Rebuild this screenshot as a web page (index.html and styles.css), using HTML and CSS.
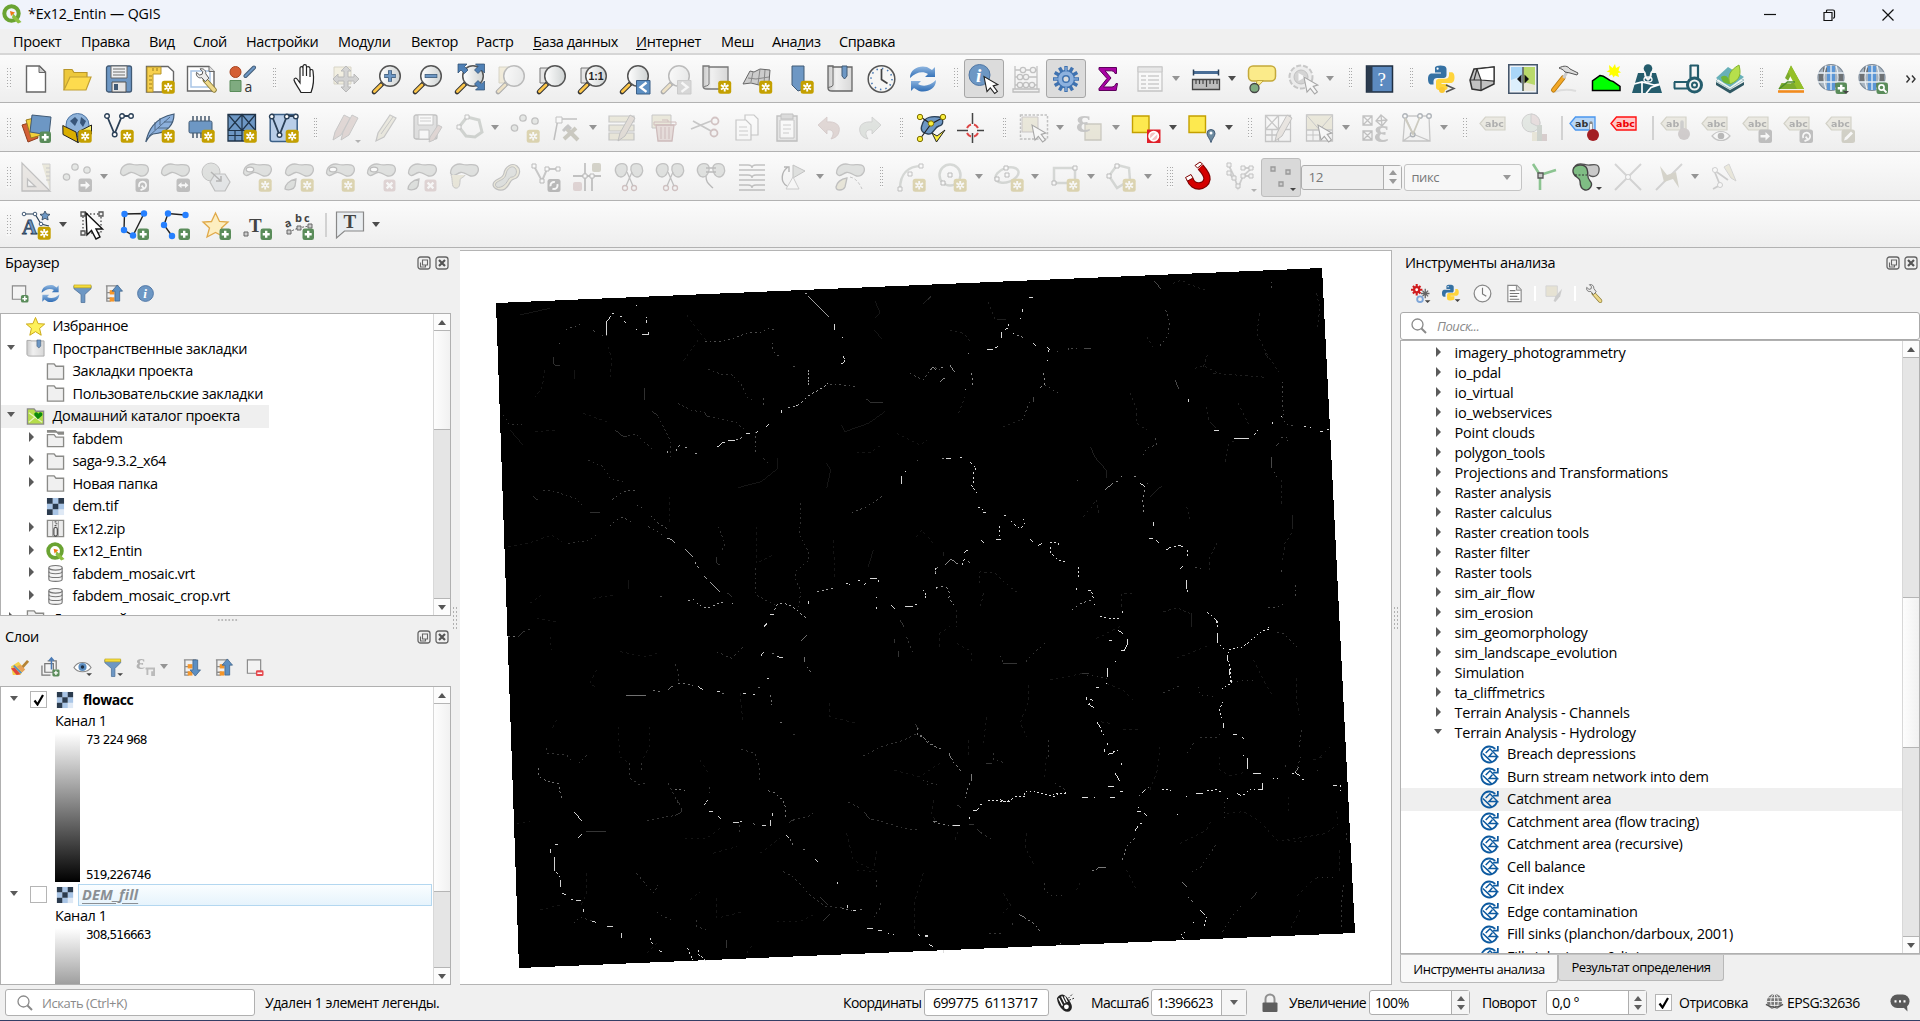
FILE: index.html
```html
<!DOCTYPE html>
<html lang="ru">
<head>
<meta charset="utf-8">
<title>*Ex12_Entin — QGIS</title>
<link rel="stylesheet" href="styles.css">
</head>
<body>
<svg class="defs" width="0" height="0" aria-hidden="true">
<defs>
<linearGradient id="gGlass" x1="0" x2="1"><stop offset="0" stop-color="#fff"/><stop offset="1" stop-color="#cfd3d3"/></linearGradient>
<linearGradient id="gPaper" x1="0" x2="1"><stop offset="0" stop-color="#c9c9c9"/><stop offset=".35" stop-color="#f0f0f0"/><stop offset="1" stop-color="#d8d8d8"/></linearGradient>
<linearGradient id="gBlue" x1="0" y1="0" x2="0" y2="1"><stop offset="0" stop-color="#8fb6e0"/><stop offset="1" stop-color="#2f6db5"/></linearGradient>
<g id="bStar"><rect x="16.7" y="16.8" width="13" height="13" rx="2.5" fill="#c4a000"/><path d="M23.2 19v8.6M19.4 21.1l7.6 4.4M27 21.1l-7.6 4.4" stroke="#fff" stroke-width="1.9"/><circle cx="23.2" cy="23.3" r=".9" fill="#c4a000"/></g>
<g id="bPlus"><rect x="18.5" y="18.5" width="11.5" height="11.5" rx="2.3" fill="#5a8c5a"/><path d="M24.2 20.8v7M20.7 24.3h7" stroke="#fff" stroke-width="2.4"/></g>
<g id="bMove"><rect x="16.5" y="16.5" width="13.5" height="13.5" rx="2.5" fill="#666"/><path d="M18.5 22h5v-3l4.5 4.3-4.5 4.3v-3h-5z" fill="#fff"/></g>
<g id="bRot"><rect x="16.5" y="16.5" width="13.5" height="13.5" rx="2.5" fill="#666"/><path d="M20.4 25a3.6 3.6 0 1 1 4.5 1.6M22.6 23.6l2.5 3-3.6 1.5" stroke="#fff" stroke-width="1.7" fill="none"/></g>
<g id="bDel"><rect x="17.5" y="17.5" width="12" height="12" rx="2.5" fill="#c99"/><path d="M20.6 20.6l5.8 5.8M26.4 20.6l-5.8 5.8" stroke="#fff" stroke-width="2.2"/></g>
<g id="mag"><path d="M2 28l9-9" stroke="#333" stroke-width="4.6" stroke-linecap="round"/><path d="M2.4 27.6l6.6-6.6" stroke="#fcc64a" stroke-width="2.8" stroke-linecap="round"/><circle cx="18" cy="12" r="10.3" fill="url(#gGlass)" stroke="#555" stroke-width="1.5"/></g>
<g id="cur"><path d="M0 0l3 15 3.3-3.6 4.4 5.6 2.7-2-4.2-5.6 4.6-1.3z" fill="#fff" stroke="#222" stroke-width="1.1"/></g>
<g id="poly"><path d="M1.500 11C2 3 9 1 14 2.500s12-2 14.500 2-1 10.500-7 9.500c-4-.7-6-4.500-10-3.500-4 1-8 6-10 .5z" fill="#b4bdb4" stroke="#666" stroke-width="1.3"/></g>
<g id="ring"><ellipse cx="8" cy="7.500" rx="3.8" ry="2.4" fill="#fff" stroke="#555" stroke-width="1.2"/></g>
<g id="leafPart"><path d="M12 17C5 18 1 23 1 27c4 2 9 0 10-3z" fill="#b4bdb4" stroke="#666" stroke-width="1.3"/></g>
<g id="label"><path d="M1 10.5L6.500 4H26v13H6.500z" fill="#d7d3b0" stroke="#9a9468" stroke-width="1.2"/></g>
<g id="knot" fill="#fff" stroke="#2b4057" stroke-width="1.4"><circle cx="3" cy="3" r="2.3"/><circle cx="10.700" cy="21.500" r="2.300"/><circle cx="18" cy="3" r="2.3"/><circle cx="27" cy="3" r="2.3"/></g>
<g id="py"><path d="M14.500 3C8 3 9 6 9 6v4h6v1H5.500S2 11 2 16.500 5 22 5 22h2.500v-3s0-3.500 3.500-3.500h6.500s3 0 3-3V6.500S21 3 14.500 3z" fill="#3571a3"/><circle cx="11.600" cy="6.200" r="1.100" fill="#fff"/><path d="M16 28c6.500 0 5.500-3 5.500-3v-3.500h-6v-1H25s3.500 0 3.500-5.500S25.500 9.700 25.500 9.700H23v3s0 3.500-3.500 3.500H13s-3 0-3 3v5.500S9.500 28 16 28z" fill="#ffd43b"/></g>
<g id="refresh"><path d="M1 13C1 4 10 0 18 2l5 3 3-3v10l-10 0 3-3C14 6 7 7 1 13z" fill="url(#gBlue)"/><path d="M27 15c0 9-9 13-17 11l-5-3-3 3V16h10l-3 3c5 3 12 2 18-4z" fill="url(#gBlue)"/></g>
<g id="globe"><circle cx="14" cy="13.500" r="13" fill="#a8b4c0" stroke="#7f8c9a" stroke-width="1.200"/><path d="M10 2h8v24h-8z" fill="#5b96d6"/><path d="M2 9.500h5.500v8H2zM20.500 9.500H26v8h-5.500zM6 3.500h4v5H6zM18 18.500h4v5h-4z" fill="#555" opacity=".7"/><path d="M9 1.500q-4 12 0 24M19 1.500q4 12 0 24M14 1v25M1 9h26M1 18h26" stroke="#e8eef4" stroke-width="1.300" fill="none"/></g>
<g id="qlogo"><circle cx="9.500" cy="9.500" r="7.200" fill="none" stroke="#6aa332" stroke-width="4"/><path d="M11 9.500l8.500 8.500-3.500 1.500-6-6z" fill="#8cbf3f"/><path d="M8 7l5 1.500-4 3.500z" fill="#ee7913"/></g>
<g id="folder"><path d="M1.500 2h7l2 2.500h8V18h-17z" fill="#f0f0f0" stroke="#8a8a87" stroke-width="1.400"/></g>
<g id="raster"><path d="M1 1h18v18H1z" fill="#dfe9f5"/><path d="M7 1h6v6H7zM1 7h6v6H1zM13 7h6v6h-6zM7 13h6v6H7z" fill="#a9c5e6"/><path d="M1 1h6v6H1zM13 1h6v6h-6zM7 7h6v6H7zM1 13h6v6H1z" fill="#2b3b4e"/></g>
<g id="db"><path d="M3 4v12c0 3 14 3 14 0V4" fill="#f4f4f4" stroke="#777" stroke-width="1.200"/><ellipse cx="10" cy="4" rx="7" ry="2.400" fill="#f4f4f4" stroke="#777" stroke-width="1.200"/><path d="M3 8c0 3 14 3 14 0M3 12c0 3 14 3 14 0" fill="none" stroke="#777" stroke-width="1.200"/></g>
<g id="saga" fill="none" stroke="#0d5aa0"><path d="M16 4.200A8.400 8.400 0 1 0 18 12.200" stroke-width="1.900"/><path d="M18.800 1v5h-5" stroke-width="1.800"/><path d="M3 9l9.500 9M6 8.500l4.500-4.500 8 8.200H9.500l3.500-4" stroke-width="1.600"/></g>
<g id="tree"><path d="M2 2h13M3 2v16h4M3 9h5M3 15h5" stroke="#8b8b8b" stroke-width="1.400" fill="none"/><rect x="6" y="6.500" width="5" height="4.500" fill="#f5962a"/><rect x="6" y="14" width="5" height="4.500" fill="#f5962a"/></g>
<g id="funnel"><path d="M1 2h18v3l-6.500 6v8.500h-4V11L1 5z" fill="#6d97c4" stroke="#4a6e96" stroke-width=".8"/><path d="M1 1h18v3H1z" fill="#f5dc3c" stroke="#b99f12" stroke-width=".6"/></g>
<g id="info"><circle cx="10" cy="10" r="8.300" fill="#6d97c4" stroke="#4f76a4"/></g>
<g id="tri"><path d="M0 0h6l-3 3z" fill="#444"/></g>
<g id="search" fill="none" stroke="#8a8a8a"><circle cx="6.500" cy="6.500" r="5.500" stroke-width="1.300"/><path d="M10.500 10.500l4.500 4.500" stroke-width="2"/></g>
<g id="wrench"><path d="M14 14l10 11" stroke="#8a7b36" stroke-width="6" stroke-linecap="round"/><path d="M15 15l9 10" stroke="#eed98a" stroke-width="4" stroke-linecap="round"/><path d="M14 15.500l-4-4.500c-4 1-7-2-6-6l3.500 3 3-1 .5-3L8 1c4-1 7 2 6.500 5.500l3.500 5z" fill="#ececec" stroke="#555" stroke-width="1.100"/></g>
<g id="float"><rect x="1" y="1" width="12" height="12" rx="2.500" fill="none" stroke="#666" stroke-width="1.300"/><path d="M5.500 4h5v5h-5zM3.500 6.500v4.500h5v-2" fill="none" stroke="#666" stroke-width="1.100"/></g>
<g id="close"><rect x="1" y="1" width="12" height="12" rx="2.500" fill="none" stroke="#666" stroke-width="1.300"/><path d="M4 4l6 6M10 4l-6 6" stroke="#555" stroke-width="2.200"/></g>
<g id="scissors" stroke="#a66" stroke-width="1.300" fill="none"><circle cx="11" cy="26" r="2.500"/><circle cx="20" cy="26" r="2.500"/><path d="M12 24L18 10M19 24L13 10" stroke="#666"/></g>
<g id="twin" fill="#b4bdb4" stroke="#666" stroke-width="1.300"><path d="M2 5c3-5 10-4 11 0s-2 10-6 10S0 9 2 5zM17 5c1-4 9-5 11 0s-1 10-5 10-7-6-6-10z"/></g>
</defs>
</svg>

<div class="window">
<header class="titlebar">
  <svg class="q" viewBox="0 0 20 20"><use href="#qlogo"/></svg>
  <h1>*Ex12_Entin — QGIS</h1>
  <div class="wbtns">
    <svg viewBox="0 0 14 14"><path d="M1 6.500h12" stroke="#111" stroke-width="1.200"/></svg>
    <svg viewBox="0 0 14 14"><path d="M2 4.500h8v8H2zM4.500 4V3q0-1 1-1H11q1.500 0 1.500 1.500V9q0 1-1.500 1.200" fill="none" stroke="#111" stroke-width="1.200"/></svg>
    <svg viewBox="0 0 14 14"><path d="M1.500 1.500l11 11M12.500 1.500l-11 11" stroke="#111" stroke-width="1.200"/></svg>
  </div>
</header>
<nav class="menu">
  <span>Проект</span><span>Правка</span><span>Вид</span><span>Слой</span><span>Настройки</span><span>Модули</span><span>Вектор</span><span>Растр</span><span><u>Б</u>аза данных</span><span><u>И</u>нтернет</span><span>Меш</span><span>Ана<u>л</u>из</span><span>Справка</span>
</nav>

<div class="bar bar1">
<i class="grip first"></i>
<span class="s"><svg viewBox="0 0 30 30"><path d="M5.500 2h13l6 6v20h-19z" fill="#fff" stroke="#666" stroke-width="1.400"/><path d="M18 2v6.500h6.500z" fill="#ccc" stroke="#666"/></svg></span>
<span class="s"><svg viewBox="0 0 30 30"><path d="M2 26V5.500h8l2 3h13V13" fill="#edc83c" stroke="#b8962a" stroke-width="1.200"/><path d="M2 26l6-13h21l-5 13z" fill="#fddb4e" stroke="#c2a032" stroke-width="1.200"/></svg></span>
<span class="s"><svg viewBox="0 0 30 30"><rect x="2.500" y="2" width="25" height="26" rx="2" fill="#6d97c4" stroke="#415a75" stroke-width="1.300"/><path d="M7 2h16v12H7z" fill="#eef0f2" stroke="#666"/><path d="M9 5h12M9 8h12M9 11h12" stroke="#999" stroke-width="1.300"/><path d="M8 18h14v10H8z" fill="#e5e5e5" stroke="#555"/><path d="M10 20h4v6h-4z" fill="#415a75"/></svg></span>
<span class="s"><svg viewBox="0 0 30 30"><path d="M1.500 2.500H23l5.500 5V28h-27z" fill="#fff" stroke="#666" stroke-width="1.400"/><path d="M2 3h14v7H8v18H2z" fill="#f7d04d" stroke="#b8962a"/><path d="M4 12h3M4 16h3M4 20h3M4 24h3M8 4v3M12 4v3" stroke="#9a7c1e"/><use href="#bStar"/></svg></span>
<span class="s"><svg viewBox="0 0 30 30"><path d="M1.500 2.500H23l5 5V27h-26.500z" fill="#fff" stroke="#666" stroke-width="1.400"/><path d="M5 7h19v16H5z" fill="none" stroke="#a9c5e6" stroke-width="1.500"/><path d="M23 2v5.500h5.500" fill="#ddd" stroke="#666"/><g transform="translate(7 4)"><use href="#wrench" transform="scale(.88)"/></g></svg></span>
<span class="s"><svg viewBox="0 0 30 30"><circle cx="8.500" cy="8" r="5.500" fill="#d45f35" stroke="#a8431f"/><path d="M3 16.500h11v11H3z" fill="#7fab80" stroke="#5a8c5a"/><path d="M18.500 12l8.500-8.500" stroke="#415a75" stroke-width="4" stroke-linecap="round"/><path d="M18.500 12l8.500-8.500" stroke="#6d97c4" stroke-width="2.200" stroke-linecap="round"/><text x="17.500" y="27.500" class="ga">a</text></svg></span>
<i class="grip wide"></i>
<span class="s"><svg viewBox="0 0 30 30"><path d="M11 28.500C9 24 5 20 4 16c0-2 2-2.500 3.500-.5L10 19V4.500C10 2 13 2 13 4.500V12 2.500C13 0 16.500 0 16.500 2.500V12 4C16.500 2 20 2 20 4.500V13 7c0-2 3-2 3 0 1 7 1 14-2 21.500z" fill="#fff" stroke="#222" stroke-width="1.200"/></svg></span>
<span class="s dis"><svg viewBox="0 0 30 30"><path d="M3 3h17v17H3z" fill="#f3e5a5" stroke="#a89b5e"/><path d="M15 2l5 5h-3v6h6v-3l5 5-5 5v-3h-6v6h3l-5 5-5-5h3v-6H7v3l-5-5 5-5v3h6V7h-3z" fill="#999" stroke="#555"/></svg></span>
<span class="s"><svg viewBox="0 0 30 30"><use href="#mag"/><path d="M18 6.200v11.600M12.200 12h11.600" stroke="#415a75" stroke-width="4"/><path d="M18 6.700v10.600M12.700 12h10.600" stroke="#6d97c4" stroke-width="2.600"/></svg></span>
<span class="s"><svg viewBox="0 0 30 30"><use href="#mag"/><path d="M11.700 12h12.600" stroke="#415a75" stroke-width="4"/><path d="M12.400 12h11.200" stroke="#6d97c4" stroke-width="2.600"/></svg></span>
<span class="s"><svg viewBox="0 0 30 30"><use href="#mag"/><g fill="#4f80b5" stroke="#2d4a6b" stroke-width=".7"><path d="M3 0h9L9.500 2.500 13 6 9.500 9.500 6 6 3 9z"/><path d="M29.500 0h-9l2.500 2.500L19.500 6 23 9.500 26.500 6l3 3z"/><path d="M29.500 26h-9l2.500-2.500-3.500-3.500 3.500-3.500 3.500 3.500 3-3z"/></g></svg></span>
<span class="s dis"><svg viewBox="0 0 30 30"><path d="M3 3h16v16H3z" fill="#f3d98a" stroke="#a89b5e"/><use href="#mag"/></svg></span>
<span class="s"><svg viewBox="0 0 30 30"><path d="M3 4h13v15H3z" fill="#e5e5e5" stroke="#777"/><use href="#mag"/></svg></span>
<span class="s"><svg viewBox="0 0 30 30"><path d="M3 4h13v15H3z" fill="#e5e5e5" stroke="#777"/><use href="#mag"/><text x="10.500" y="16" class="g11">1:1</text></svg></span>
<span class="s"><svg viewBox="0 0 30 30"><use href="#mag"/><path d="M16.500 16.500H30V30H16.500z" fill="#5d8fc2" stroke="#3b5f86"/><path d="M26.500 18.500l-6 4.700 6 4.700" stroke="#fff" stroke-width="2.400" fill="none"/></svg></span>
<span class="s dis"><svg viewBox="0 0 30 30"><use href="#mag"/><path d="M16.500 16.500H30V30H16.500z" fill="#aaa" stroke="#888"/><path d="M20.500 18.500l6 4.700-6 4.700" stroke="#fff" stroke-width="2.400" fill="none"/></svg></span>
<span class="s"><svg viewBox="0 0 30 30"><path d="M1 2h6v1h19v22H5c-3 0-4-1-4-3z" fill="url(#gPaper)" stroke="#777" stroke-width="1.300"/><path d="M7 3v17c0 2-5 2-5 3" fill="none" stroke="#777"/><use href="#bStar" x="-.5"/></svg></span>
<span class="s"><svg viewBox="0 0 30 30"><path d="M0 20L7 7l4 1 6-3 10 1-1 12-10 3-8-2z" fill="#ccc" stroke="#666"/><path d="M5 14l8 1 13-2M10 8L8 18M17 5l-2 15M22 6l-1 13" stroke="#888" fill="none"/><use href="#bStar" x="-.5"/></svg></span>
<span class="s"><svg viewBox="0 0 30 30"><path d="M7 2h12v23l-6 2-6-6z" fill="#6d97c4" stroke="#415a75"/><use href="#bStar" x="-1"/></svg></span>
<span class="s"><svg viewBox="0 0 30 30"><path d="M2 2h5v1h19v24H6c-3 0-4-1-4-3z" fill="url(#gPaper)" stroke="#666" stroke-width="1.300"/><path d="M7 3v18c0 2-5 2-5 3" fill="none" stroke="#666"/><path d="M16 2h5v10l-2.500 3-2.500-3z" fill="#6d97c4" stroke="#415a75"/></svg></span>
<span class="s"><svg viewBox="0 0 30 30"><circle cx="14.500" cy="15" r="13.300" fill="#f6f6f4" stroke="#555" stroke-width="1.500"/><circle cx="14.500" cy="15" r="10.500" fill="none" stroke="#4a7ab5" stroke-width="1.600" stroke-dasharray="1.500 4"/><path d="M14.500 5v10.500l6 4" fill="none" stroke="#444" stroke-width="1.700"/></svg></span>
<span class="s"><svg viewBox="0 0 30 30"><use href="#refresh" x="1" y="1"/></svg></span>
<i class="grip"></i>
<span class="s on"><svg viewBox="0 0 30 30"><circle cx="10.500" cy="11" r="10.500" fill="#6d97c4" stroke="#4f76a4"/><text x="7" y="18" class="gi">i</text><use href="#cur" x="15" y="12.500"/></svg></span>
<span class="s dis"><svg viewBox="0 0 30 30"><g stroke="#666" stroke-width="1.300" fill="#eee"><path d="M4 2v24M26 2v24M4 6h22M4 13h22M4 21h22" /><path d="M2 25h26v3H2z"/><circle cx="12" cy="6" r="2.700"/><circle cx="22" cy="6" r="2.700"/><circle cx="9" cy="13" r="2.700"/><circle cx="15" cy="13" r="2.700"/><circle cx="9" cy="21" r="2.700"/><circle cx="15" cy="21" r="2.700"/><circle cx="21" cy="21" r="2.700"/></g></svg></span>
<span class="s on"><svg viewBox="0 0 30 30"><path d="M15 2v26M2 15h26M8.500 3.700l13 22.600M3.700 21.500l22.600-13M21.500 3.700l-13 22.600M3.700 8.500l22.600 13" stroke="#3f72b0" stroke-width="3.400"/><circle cx="15" cy="15" r="8.500" fill="#8db1de" stroke="#3f72b0" stroke-width="1.300"/><path d="M15 3v4M15 23v4M3 15h4M23 15h4" stroke="#7ea6d8" stroke-width="1.600"/><circle cx="15" cy="15" r="3.300" fill="#dcdcdc" stroke="#3f72b0" stroke-width="1.500"/></svg></span>
<span class="s"><svg viewBox="0 0 30 30"><path d="M6 3.500h17.500v6h-1.500q-.6-2.700-3.500-2.700h-6.500l6 7.200-7.500 9h8.500q3 0 4-3.500h1.500l-1.300 7H6v-2l8-10-8-9z" fill="#a803a3" stroke="#5e005c" stroke-width="1"/></svg></span>
<span class="s dis"><svg viewBox="0 0 30 30"><path d="M3 3h24v24H3z" fill="#fff" stroke="#777" stroke-width="1.300"/><path d="M3 3h24v5H3z" fill="#ccc" stroke="#777"/><path d="M6 12h5M13 12h11M6 16h5M13 16h11M6 20h5M13 20h11M6 24h5M13 24h11" stroke="#888" stroke-width="1.500"/></svg></span><i class="arr off"></i>
<span class="s"><svg viewBox="0 0 30 30"><path d="M2 8.500h26" stroke="#4a6e96" stroke-width="3"/><path d="M2.500 5.500v6M27.500 5.500v6" stroke="#2b4057" stroke-width="1.500"/><path d="M1.500 15.500h27v10h-27z" fill="#bdbdbd" stroke="#444" stroke-width="1.300"/><path d="M5 16v4M8.500 16v4M12 16v4M15.500 16v7M19 16v4M22.500 16v4M26 16v4" stroke="#444" stroke-width="1.200"/></svg></span><i class="arr"></i>
<span class="s"><svg viewBox="0 0 30 30"><rect x="1.500" y="2" width="27" height="15" rx="4.500" fill="#fbeb8a" stroke="#c4a93a" stroke-width="1.500"/><path d="M10 16.500l-2 9 8.500-9z" fill="#fbeb8a" stroke="#c4a93a"/><circle cx="7.500" cy="24" r="4.500" fill="#7fab80" stroke="#444" stroke-width="1.300"/></svg></span>
<span class="s dis"><svg viewBox="0 0 30 30"><circle cx="13" cy="13" r="11.500" fill="#ddd" stroke="#777" stroke-width="2" stroke-dasharray="5 2"/><circle cx="13" cy="13" r="7" fill="#999" stroke="#666"/><path d="M10.500 9l7 4-7 4z" fill="#fff"/><use href="#cur" x="16" y="13"/></svg></span><i class="arr off"></i>
<i class="grip"></i>
<span class="s"><svg viewBox="0 0 30 30"><path d="M1.500 2h26v26h-26z" fill="#5c8ac0" stroke="#1f2f42" stroke-width="1.500"/><path d="M1.500 2h6v26h-6z" fill="#2b3b4e"/><text x="12.500" y="21.500" class="gq">?</text></svg></span>
<i class="grip"></i>
<span class="s"><svg viewBox="0 0 30 30"><use href="#py" y="-1.500"/><circle cx="16" cy="26" r="3" fill="#fbc832"/><path d="M20 21l8 3.500-8 3.500" fill="none" stroke="#555" stroke-width="1.500"/></svg></span>
<span class="s"><svg viewBox="0 0 30 30"><path d="M7 5l20-2v17l-13 6.500L5 25 3 16z" fill="#c2c2c2" stroke="#333" stroke-width="1.500"/><path d="M10 5l17-2v14l-13-1z" fill="#fff" stroke="#333" stroke-width="1.200"/><path d="M3 16l11 0v10M10 5L7 16" fill="none" stroke="#333" stroke-width="1.200"/></svg></span>
<span class="s"><svg viewBox="0 0 30 30"><path d="M.8.800h28.400v28.400H.8z" fill="#eef3f8" stroke="#45566b" stroke-width="1.600"/><path d="M3 3h11.500v24H3z" fill="#a9d6f8"/><path d="M15.500 3H27v24H15.500z" fill="#b9d96b"/><path d="M16 18l11 3v6H16z" fill="#e9e6d8"/><path d="M3 16l11-4v15H3z" fill="#dceffc"/><path d="M15 3v24" stroke="#333" stroke-width="1.200"/><path d="M9 15l4.500-4.500v9zM21 15l-4.500-4.500v9z" fill="#111"/></svg></span>
<span class="s"><svg viewBox="0 0 30 30"><path d="M4 28q11-4 22-1" stroke="#ddd" stroke-width="2" fill="none"/><path d="M13 14L3.500 26" stroke="#b87a10" stroke-width="5" stroke-linecap="round"/><path d="M13 14L3.500 26" stroke="#f3a827" stroke-width="3.200" stroke-linecap="round"/><path d="M17 8l-3.500 6" stroke="#ccc" stroke-width="3"/><path d="M9 4c5-3 9-2 11 1l8 4-1 2-7-2-5-1c-2-3-4-3-6-4z" fill="#ddd" stroke="#555"/></svg></span>
<span class="s"><svg viewBox="0 0 30 30"><path d="M1.500 26.500V17L9 11.500c6 0 7 5 13 6l7 5v4z" fill="#0f0" stroke="#000" stroke-width="1.500"/><path d="M18 1l3.500 3L24 0l1 4 4-2-1.500 4.500 2.500 2-3 .5 1 4-4-1.500-1.500 2-1.500-3-3 1.500 1-3.500-3.500-1 3-1.500z" fill="#ff0"/></svg></span>
<span class="s"><svg viewBox="0 0 30 30"><path d="M6 9h6c0 3 1 6 4 8 3-2 4-5 4-8h4l6 20H0z" fill="#245c6c"/><circle cx="16" cy="4.500" r="4.300" fill="#245c6c"/><path d="M13.500 8h5l-1.500 6h-2z" fill="#245c6c"/><path d="M2 20l8-2 12 3 6-1M14 29.500l5-6 9-3M10 18v11" stroke="#fff" stroke-width="1.700" fill="none"/><ellipse cx="16" cy="15.500" rx="4" ry="2.500" fill="none" stroke="#fff" stroke-width="1.300"/></svg></span>
<span class="s"><svg viewBox="0 0 30 30"><g fill="none" stroke="#245c6c"><path d="M17.500 1v13M25 1v13M17 1.500h8.500" stroke-width="2.200"/><path d="M1 18h14M1 24.500h14M1.500 18v6.500" stroke-width="2"/><circle cx="21.500" cy="21" r="7" stroke-width="3"/><circle cx="21.500" cy="21" r="2.500" stroke-width="2"/></g></svg></span>
<span class="s"><svg viewBox="0 0 30 30"><path d="M1 18l14 8 14-8v3L15 29.500 1 21z" fill="#2f5863"/><path d="M1 17L11 7l18 9-14 9z" fill="#eef3f3" stroke="#9fc2c6"/><path d="M1 14L13 3l16 10-14 10z" fill="#67b0b8"/><path d="M6 13c5-3 8 0 9 7-5 0-8-2-9-7z" fill="#6fb536"/><path d="M15 20c-3-8 0-14 9-19 2 8 2 15-9 19z" fill="#b6df4c" stroke="#84b52f"/></svg></span>
<i class="grip"></i>
<span class="s"><svg viewBox="0 0 30 30"><path d="M15 1.500L28 25H2.500l3-6 10 .5L9 14z" fill="#7cab2d"/><path d="M11 19l4-8 4.500 8z" fill="#fff"/><path d="M15 1.500L28 25h-7L12 8z" fill="#94bf28"/><path d="M3 25l8.500-7H19" fill="none" stroke="#4d8a2c" stroke-width="1.500"/><path d="M2 27.500h26" stroke="#f28b1e" stroke-width="2.600"/></svg></span>
<span class="s"><svg viewBox="0 0 30 30"><use href="#globe"/><use href="#bPlus"/><use href="#tri" x="26" y="27"/></svg></span>
<span class="s"><svg viewBox="0 0 30 30"><use href="#globe"/><rect x="18.500" y="18.500" width="11.500" height="11.500" rx="2.300" fill="#5a8c5a"/><circle cx="23.500" cy="23.500" r="2.600" fill="none" stroke="#fff" stroke-width="1.600"/><path d="M25.500 25.500l3 3" stroke="#fff" stroke-width="1.800"/></svg></span>
<svg class="more" viewBox="0 0 12 10"><path d="M1.500 1.500l3 3.500-3 3.500M7 1.500L10 5 7 8.500" fill="none" stroke="#333" stroke-width="1.400"/></svg>
</div>

<div class="bar bar2">
<i class="grip first"></i>
<span class="s"><svg viewBox="0 0 30 30"><path d="M1 12l10-3 6 16-10 4z" fill="#d45f35" stroke="#8f3d1e"/><path d="M5 7l12-3 4 18-11 3z" fill="#f2cf3a" stroke="#9a7c1e"/><path d="M11 2l19 2-2 18-19-3z" fill="#6d97c4" stroke="#415a75"/><use href="#bPlus"/></svg></span>
<span class="s"><svg viewBox="0 0 30 30"><circle cx="15.500" cy="12" r="11.500" fill="#8fb3da" stroke="#4f76a4"/><path d="M8 8l5-4 3 3-3 6zM19 4l5 4-3 6-3-4z" fill="#38567a"/><path d="M.8 12.500L14 19l2 10.500-15-8z" fill="#d9ae00" stroke="#222"/><path d="M16 19l13.500-7v9L16 29.500z" fill="#fbf06a" stroke="#222"/><use href="#bStar"/></svg></span>
<span class="s"><svg viewBox="0 0 30 30"><path d="M3 3l7.500 18L18 3h9" stroke="#2b4057" stroke-width="1.800" fill="none"/><use href="#knot"/><use href="#bStar"/></svg></span>
<span class="s"><svg viewBox="0 0 30 30"><path d="M.8 29C3 19 8 5 29 1c0 10-6 19-21 20C5 22 3 25 .8 29z" fill="#8cb0dc" stroke="#415a75" stroke-width="1.200"/><path d="M4 23L25 4M10 17V9M15 12V5M13 15h10M19 9h8" stroke="#415a75" fill="none" stroke-width=".8"/><use href="#bStar"/></svg></span>
<span class="s"><svg viewBox="0 0 30 30"><path d="M7 3v22M11 3v22M15 3v22M19 3v22M23 3v22" stroke="#2b4057" stroke-width="1.300"/><rect x="3" y="8" width="23" height="12" rx="1.500" fill="#6d97c4" stroke="#415a75"/><use href="#bStar" x="-1"/></svg></span>
<span class="s"><svg viewBox="0 0 30 30"><path d="M1 1.500h27.500V28H1z" fill="#6d97c4" stroke="#1f3348" stroke-width="1.300"/><path d="M1 1.500l14 16 13.500-16M1 17.500L15 1.500l13.500 16M1 17.500h27.500M15 1.500V28M1 22.500h14M8 17.500V28" stroke="#1f3348" stroke-width="1.200" fill="none"/><use href="#bStar"/></svg></span>
<span class="s"><svg viewBox="0 0 30 30"><rect x="1.200" y="1.500" width="27" height="27" rx="2" fill="#b9cee8" stroke="#3b5f86" stroke-width="1.500"/><path d="M3 3l7.500 19L18 3h8" stroke="#2b4057" stroke-width="1.800" fill="none"/><use href="#knot" x="-.2" y=".5"/><use href="#bStar"/></svg></span>
<i class="grip"></i>
<span class="s dis"><svg viewBox="0 0 30 30"><g fill="#c9a096" stroke="#777"><path d="M3 27l2-8L14 2l6 3-9 17z"/><path d="M11 27l2-8L22 2l6 3-9 17z"/></g></svg><svg class="dd" viewBox="0 0 6 3"><use href="#tri"/></svg></span>
<span class="s dis"><svg viewBox="0 0 30 30"><path d="M5 28l2-8L19 2l6 3-12 19z" fill="#d8d2a8" stroke="#777" stroke-width="1.200"/><path d="M10 21L22 4" stroke="#777"/></svg></span>
<span class="s dis"><svg viewBox="0 0 30 30"><rect x="2" y="2" width="23" height="24" rx="2" fill="#bbb" stroke="#666" stroke-width="1.300"/><path d="M6 2h15v10H6z" fill="#fff" stroke="#777"/><path d="M8 5h11M8 8h11" stroke="#888"/><path d="M7 17h10v9H7z" fill="#fff" stroke="#777"/><path d="M17 29l1-5 8-12 4 2-8 13z" fill="#c9a096" stroke="#777"/></svg></span>
<span class="s dis"><svg viewBox="0 0 30 30"><path d="M5 14l8-10 12 3 3 12-7 5-9-1z" fill="none" stroke="#8d9b8d" stroke-width="3"/><g fill="#fff" stroke="#666"><path d="M3 12h4v4H3zM11 2h4v4h-4z"/></g></svg></span><i class="arr off"></i>
<span class="s dis"><svg viewBox="0 0 30 30"><g fill="#c5cdc5" stroke="#666" stroke-width="1.300"><circle cx="13" cy="5" r="3.200"/><circle cx="25" cy="8" r="3.200"/><circle cx="4.500" cy="15" r="3.200"/></g><use href="#bStar"/></svg></span>
<span class="s dis"><svg viewBox="0 0 30 30"><path d="M6 6h20M7 6L3 27" stroke="#666" stroke-width="1.500"/><path d="M5 4h6v6H5z" fill="#fff" stroke="#666"/><path d="M13 26l12-11M14 14l13 13" stroke="#877f5a" stroke-width="4"/><path d="M12 18l5-5 3 3" stroke="#777" stroke-width="3" fill="none"/></svg></span><i class="arr off"></i>
<span class="s dis"><svg viewBox="0 0 30 30"><g fill="#d9cf95" stroke="#777" stroke-width="1.200"><path d="M2 3h25v6H2zM2 12h25v6H2zM2 20h25v7H2z"/></g><path d="M11 28l2-8L23 2l5 3-10 18z" fill="#c9b096" stroke="#666"/></svg></span>
<span class="s dis"><svg viewBox="0 0 30 30"><path d="M3 2h19v13H3z" fill="#d9cf95" stroke="#777"/><path d="M7 12h18l-2 16H9z" fill="#dcb0a8" stroke="#a55" stroke-width="1.300"/><path d="M5 9h22v3H5zM12 14v12M16 14v12M20 14v12M13 7h6v2" stroke="#a55" fill="none"/></svg></span>
<span class="s dis"><svg viewBox="0 0 30 30"><path d="M1 16l20-8M3 8l18 10" stroke="#777" stroke-width="1.800"/><g fill="none" stroke="#a66" stroke-width="1.800"><circle cx="25" cy="8" r="3.500"/><circle cx="24" cy="20" r="3.500"/></g></svg></span>
<span class="s dis"><svg viewBox="0 0 30 30"><g fill="#fff" stroke="#777" stroke-width="1.200"><path d="M14 2h9l4 4v16H14z"/><path d="M5 7h10l5 5v15H5z"/></g><path d="M8 14h8M8 18h9M8 22h9" stroke="#888"/></svg></span>
<span class="s dis"><svg viewBox="0 0 30 30"><path d="M5 3h20v25H5z" fill="#ccc" stroke="#666" stroke-width="1.400"/><path d="M8 7h14v18H8z" fill="#fff" stroke="#777"/><path d="M9 1h12v5H9z" fill="#aaa" stroke="#666"/><path d="M11 12h8M11 16h8M11 20h6" stroke="#888"/></svg></span>
<span class="s dis"><svg viewBox="0 0 30 30"><path d="M4 12l9-8v5c8-1 14 3 12 10-1 4-4 6-8 7 4-6 2-10-4-9v4z" fill="#c9a096" stroke="#a77" stroke-width=".8"/></svg></span>
<span class="s dis"><svg viewBox="0 0 30 30"><path d="M26 12l-9-8v5C9 8 3 12 5 19c1 4 4 6 8 7-4-6-2-10 4-9v4z" fill="#b5c5b5" stroke="#888" stroke-width=".8"/></svg></span>
<i class="grip"></i>
<span class="s"><svg viewBox="0 0 30 30"><path d="M6 12C8 3 18 3 23 4s5 8 0 9-5 9-11 8-8-4-6-9z" fill="#6d97c4" stroke="#2b4057" stroke-width="1.300"/><path d="M4 3.500l11 7.500L28 4M15 11L4 26" stroke="#222" stroke-width="1.200" fill="none"/><g fill="#f9ee3e" stroke="#7d6d00"><circle cx="4" cy="4" r="2.700"/><circle cx="27" cy="4" r="2.700"/><circle cx="15" cy="10.500" r="2.700"/><circle cx="4" cy="26" r="2.700"/></g><path d="M16 20l5 3 8-6-8.500 12z" fill="#fcef3c" stroke="#222" stroke-width="1"/></svg></span>
<span class="s"><svg viewBox="0 0 30 30"><path d="M15.500 0v11M15.500 20v10M0 17.500h11M20 17.500h7" stroke="#444" stroke-width="1.500"/><path d="M10 15c1-2 2-3 4-3.500M17 11.500c2 .5 3 1.500 4 3.500M10 20c1 2 2 3 4 3.500M17 23.500c2-.5 3-1.500 4-3.500" stroke="#d44" stroke-width="2" fill="none"/></svg></span>
<i class="grip"></i>
<span class="s dis"><svg viewBox="0 0 30 30"><path d="M1.500 2h27v24h-27z" fill="none" stroke="#666" stroke-width="1.500" stroke-dasharray="2.500 1.500"/><path d="M3 4h16v15H3z" fill="#d9cf95" stroke="#877"/><use href="#cur" x="13" y="12"/></svg></span><i class="arr off"></i>
<span class="s dis"><svg viewBox="0 0 30 30"><path d="M10 11h16v16H10z" fill="#d9cf95" stroke="#877f5a" stroke-width="1.300"/><text x="1" y="19" class="ge">ε</text></svg></span><i class="arr off"></i>
<span class="s"><svg viewBox="0 0 30 30"><path d="M1.500 3h16.500v16.500H1.500z" fill="#fde94f" stroke="#c4a000" stroke-width="1.400"/><path d="M16 16.500h13.500V30H16z" fill="#e0202a"/><circle cx="22.700" cy="23.200" r="4.600" fill="#f7c0c2" stroke="#fff" stroke-width="1.800"/><path d="M19.500 26.500l6.500-6.500" stroke="#fff" stroke-width="2"/></svg></span><i class="arr"></i>
<span class="s"><svg viewBox="0 0 30 30"><path d="M2 3h16.500v16.500H2z" fill="#fde94f" stroke="#c4a000" stroke-width="1.400"/><path d="M24 29.500c-1-4-4-6-4-9a4 4 0 0 1 8 0c0 3-3 5-4 9z" fill="#6d8ba0" stroke="#415a75"/><circle cx="24" cy="20" r="1.500" fill="#fff"/></svg></span><i class="arr"></i>
<i class="grip"></i>
<span class="s dis"><svg viewBox="0 0 30 30"><path d="M1.500 2.500h25v26h-25zM1.500 2.500l13 14 12-14M1.500 16.500h25M1.500 22h13M8 16.500v12M14.500 2.500v26M1.500 16.500l13-14" fill="none" stroke="#777" stroke-width="1.300"/><path d="M11 28l2-8L23 2l5 3-10 18z" fill="#d9c8b6" stroke="#666"/></svg></span>
<span class="s dis"><svg viewBox="0 0 30 30"><path d="M1.500 2h26v26h-26z" fill="none" stroke="#777" stroke-width="1.300"/><path d="M1.500 2h26v15h-26z" fill="#d9cf95" stroke="#777"/><path d="M1.500 2l13 15 13-15M1.500 17h26M1.500 22h13M8 17v11M14.500 17v11" fill="none" stroke="#777"/><use href="#cur" x="13" y="12"/></svg></span><i class="arr off"></i>
<span class="s dis"><svg viewBox="0 0 30 30"><path d="M2 3h9v9H2zM2 18h9v9H2zM2 3l9 9M11 3l-9 9M2 18l9 9M11 18l-9 9M20 2l6 5-5 6-6-5zM20 2l1 11M15 8l11-1" fill="none" stroke="#666" stroke-width="1.300"/><text x="13" y="29" class="ge">ε</text></svg></span>
<span class="s dis"><svg viewBox="0 0 30 30"><path d="M3 3h24l1 25H1zM1 28l10-7L3 3M11 21l17 7" fill="none" stroke="#777" stroke-width="1.300"/><use href="#knot"/><path d="M3 5l8 16 7-17" fill="none" stroke="#8a8250" stroke-width="1.800"/></svg></span><i class="arr off"></i>
<i class="grip"></i>
<span class="s dis"><svg viewBox="0 0 30 30"><use href="#label"/><text x="6" y="14" class="gl">abc</text></svg></span>
<span class="s dis"><svg viewBox="0 0 30 30"><circle cx="11" cy="10" r="9" fill="#bcd0bc" stroke="#888"/><path d="M11 10V1a9 9 0 0 1 8 13z" fill="#d9b0b0" stroke="#888"/><path d="M12 19h5v9h-5z" fill="#d9cf95"/><path d="M17 12h5v16h-5z" fill="#8aa08a"/><path d="M22 21h5v7h-5z" fill="#b98a8a"/></svg></span>
<i class="sep"></i>
<span class="s"><svg viewBox="0 0 30 30"><path d="M1 10.500L6.500 4H26v13H6.500z" fill="#b8d6f5" stroke="#4a96ee" stroke-width="1.300"/><text x="6" y="14" class="gl">ab</text><path d="M22 10v8" stroke="#888" stroke-width="3.500" stroke-linecap="round"/><path d="M22 11v6" stroke="#fff" stroke-width="1.800"/><circle cx="24" cy="22" r="6" fill="#a31f24"/></svg></span>
<span class="s"><svg viewBox="0 0 30 30"><path d="M1 10.500L6.500 4H26v13H6.500z" fill="#ffc9c9" stroke="#f11" stroke-width="1.400"/><text x="6" y="14" class="gl red">abc</text></svg></span>
<i class="sep"></i>
<span class="s dis"><svg viewBox="0 0 30 30"><use href="#label"/><text x="6" y="14" class="gl">ab</text><path d="M22 9v8" stroke="#888" stroke-width="3.500" stroke-linecap="round"/><circle cx="24" cy="21" r="6" fill="#988"/></svg></span>
<span class="s dis"><svg viewBox="0 0 30 30"><use href="#label"/><text x="6" y="14" class="gl">abc</text><path d="M11 23c5-6 13-6 18 0-5 6-13 6-18 0z" fill="#fff" stroke="#777" stroke-width="1.200"/><circle cx="20" cy="23" r="3.300" fill="#555"/></svg></span>
<span class="s dis"><svg viewBox="0 0 30 30"><use href="#label"/><text x="6" y="14" class="gl">abc</text><use href="#bMove"/></svg></span>
<span class="s dis"><svg viewBox="0 0 30 30"><use href="#label"/><text x="6" y="14" class="gl">abc</text><use href="#bRot"/></svg></span>
<span class="s dis"><svg viewBox="0 0 30 30"><use href="#label"/><text x="6" y="14" class="gl">abc</text><rect x="16.500" y="16.500" width="13.500" height="13.500" rx="2.500" fill="#9a9468"/><path d="M19 27.500l1-3 6-6 2 2-6 6z" fill="#fff"/></svg></span>
</div>

<div class="bar bar3">
<i class="grip first"></i>
<span class="s dis"><svg viewBox="0 0 30 30"><path d="M1 1v28h28zM6.500 17v7.500h8z" fill="#d8ccc0" stroke="#666" stroke-width="1.300" fill-rule="evenodd"/><path d="M21 2h8v26" fill="#d9cf95" stroke="#888"/><path d="M25 6h4M25 10h4M25 14h4M25 18h4" stroke="#777"/></svg></span>
<span class="s dis"><svg viewBox="0 0 30 30"><g fill="#c5cdc5" stroke="#666" stroke-width="1.200"><circle cx="13" cy="5" r="3.200"/><circle cx="25" cy="8" r="3.200"/><circle cx="4.500" cy="15" r="3.200"/></g><use href="#bMove"/></svg></span><i class="arr off"></i>
<span class="s dis"><svg viewBox="0 0 30 30"><use href="#poly"/><use href="#bRot"/></svg></span>
<span class="s dis"><svg viewBox="0 0 30 30"><use href="#poly"/><rect x="16.500" y="16.500" width="13.500" height="13.500" rx="2.500" fill="#666"/><path d="M18 23.200l3.500-3v2h3.500v-2l3.500 3-3.500 3v-2h-3.500v2z" fill="#fff"/></svg></span>
<span class="s dis"><svg viewBox="0 0 30 30"><circle cx="10" cy="10" r="9" fill="#b4bdb4" stroke="#666"/><path d="M14 12h10l5 8-5 9H14l-5-9z" fill="#c5cdd5" stroke="#666" stroke-width="1.200"/><path d="M10 10l10 9M20 14v5h-5" stroke="#444" fill="none" stroke-width="1.500"/></svg></span>
<span class="s dis"><svg viewBox="0 0 30 30"><use href="#poly"/><use href="#ring"/><use href="#bStar"/></svg></span>
<span class="s dis"><svg viewBox="0 0 30 30"><use href="#poly"/><use href="#leafPart"/><use href="#bStar"/></svg></span>
<span class="s dis"><svg viewBox="0 0 30 30"><use href="#poly"/><use href="#ring"/><use href="#bStar"/></svg></span>
<span class="s dis"><svg viewBox="0 0 30 30"><use href="#poly"/><use href="#ring"/><use href="#bDel"/></svg></span>
<span class="s dis"><svg viewBox="0 0 30 30"><use href="#poly"/><use href="#leafPart"/><use href="#bDel"/></svg></span>
<span class="s dis"><svg viewBox="0 0 30 30"><use href="#poly"/><path d="M2 13c2 4 0 12 4 13s5-3 5-7 4-3 5-6" fill="#d9cf95" stroke="#777"/></svg></span>
<span class="s dis"><svg viewBox="0 0 30 30"><path d="M4 20c3-4 9-3 10-9S22 0 27 4s2 12-3 13-4 7-9 10S0 26 4 20z" fill="#d9cf95" stroke="#666" stroke-width="1.200"/><path d="M6 21c3-3 9-3 10-9s6-9 9-6 1 9-3 9-4 6-9 9-9 1-7-3z" fill="#b4bdb4" stroke="#666"/></svg></span>
<span class="s dis"><svg viewBox="0 0 30 30"><path d="M3 4l8 15 5-12h11" fill="none" stroke="#777" stroke-width="2"/><g fill="#fff" stroke="#555"><path d="M1 2h4v4H1zM9 17h4v4H9zM14 5h4v4h-4zM25 5h4v4h-4z"/></g><rect x="16.500" y="17" width="13" height="13" rx="2.500" fill="#555"/><circle cx="23" cy="23.500" r="3.500" fill="none" stroke="#fff" stroke-width="2" stroke-dasharray="7 3"/></svg></span>
<span class="s dis"><svg viewBox="0 0 30 30"><path d="M13 1v28M1 14h28M20 14v15" stroke="#666" stroke-width="1.800"/><g fill="#fff" stroke="#555"><path d="M11 12h4v4h-4zM18 12h4v4h-4z"/></g><rect x="20" y="1" width="9" height="9" rx="2" fill="#9a9468"/><rect x="1" y="20" width="9" height="9" rx="2" fill="#c99"/></svg></span>
<span class="s dis"><svg viewBox="0 0 30 30"><use href="#twin"/><use href="#scissors"/></svg></span>
<span class="s dis"><svg viewBox="0 0 30 30"><use href="#twin"/><use href="#scissors"/></svg></span>
<span class="s dis"><svg viewBox="0 0 30 30"><use href="#twin"/><path d="M10 6h10M10 10h10M10 14c0 7 3 8 7 12" stroke="#555" stroke-width="1.300" fill="none"/></svg></span>
<span class="s dis"><svg viewBox="0 0 30 30"><path d="M2 3h9q4 0 4 3 0-3 4-3h9M2 8h26M2 13h9q4 0 4 3 0-3 4-3h9M2 18h26M2 23h9q4 0 4 3 0-3 4-3h9M2 28h26" stroke="#666" stroke-width="1.400" fill="none"/></svg></span>
<span class="s dis"><svg viewBox="0 0 30 30"><path d="M14 3l12 6-12 7z" fill="#b4bdb4" stroke="#666"/><path d="M14 15l6 12H7z" fill="#fff" stroke="#888"/><path d="M8 24C1 20 2 10 9 5M5 5h5v5" stroke="#444" stroke-width="1.400" fill="none"/></svg></span><i class="arr off"></i>
<span class="s dis"><svg viewBox="0 0 30 30"><use href="#poly"/><path d="M12 16c-6 1-10 4-11 9 0 4 7 4 9 0z" fill="#d9cf95" stroke="#666" stroke-width="1.300"/><path d="M15 15c5 1 9 5 12 12" stroke="#777" stroke-dasharray="3 2" fill="none"/></svg></span>
<i class="grip"></i>
<span class="s dis"><svg viewBox="0 0 30 30"><path d="M4 27C4 12 12 4 26 4" stroke="#9aa59a" stroke-width="2.500" fill="none"/><g fill="#fff" stroke="#666"><path d="M2 25h4v4H2zM12 10h4v4h-4zM23 2h4v4h-4z"/></g><use href="#bStar"/></svg></span>
<span class="s dis"><svg viewBox="0 0 30 30"><circle cx="13" cy="13" r="10.500" fill="none" stroke="#9aa59a" stroke-width="2.500"/><path d="M11 11h4v4h-4zM4 19h4v4H4z" fill="#fff" stroke="#555"/><use href="#bStar"/></svg></span><i class="arr off"></i>
<span class="s dis"><svg viewBox="0 0 30 30"><ellipse cx="13" cy="13" rx="12" ry="7" fill="none" stroke="#9aa59a" stroke-width="2.500" transform="rotate(-20 13 13)"/><path d="M11 11h4v4h-4zM10 4h4v4h-4zM1 15h4v4H1z" fill="#fff" stroke="#555"/><use href="#bStar"/></svg></span><i class="arr off"></i>
<span class="s dis"><svg viewBox="0 0 30 30"><path d="M4 6h21v15H4z" fill="none" stroke="#9aa59a" stroke-width="2.500"/><path d="M2 19h4v4H2zM23 4h4v4h-4z" fill="#fff" stroke="#555"/><use href="#bStar"/></svg></span><i class="arr off"></i>
<span class="s dis"><svg viewBox="0 0 30 30"><path d="M3 14L11 3l12 3 1 12-13 8z" fill="none" stroke="#9aa59a" stroke-width="2.500"/><path d="M1 12h4v4H1zM9 2h4v4H9z" fill="#fff" stroke="#555"/><use href="#bStar"/></svg></span><i class="arr off"></i>
<i class="grip snap"></i>
<span class="s"><svg viewBox="0 0 30 30"><path d="M6 17C9 27 22 25.500 23 17q.500-4-6.500-12" stroke="#7e0000" stroke-width="7.400" fill="none"/><path d="M6 17C9 27 22 25.500 23 17q.500-4-6.500-12" stroke="#d40000" stroke-width="5.200" fill="none"/><path d="M3.500 19l5.500-3-2-3.500-5.500 3zM13.500 6l5-4 -2.500-2-5 3.500z" fill="#fff" stroke="#7e0000"/></svg></span>
<span class="s dis"><svg viewBox="0 0 30 30"><path d="M3 4l5 10 4 12 5-12 9-8h-9M3 10l5 8M17 14h9" fill="none" stroke="#888" stroke-width="1.800"/><g fill="#eee" stroke="#666"><path d="M1 1h4v4H1zM1 9h4v4H1zM6 14h4v4H6zM10 22h4v4h-4zM15 4h4v4h-4zM23 4h4v4h-4zM15 12h4v4h-4zM23 12h4v4h-4z"/></g></svg><svg class="dd" viewBox="0 0 6 3"><use href="#tri"/></svg></span>
<span class="s on soft"><svg viewBox="0 0 30 30"><g fill="#ccc" stroke="#999" stroke-width="1.300"><path d="M5 5h4v4H5zM20 8h4v4h-4zM13 20h4v4h-4z"/></g></svg><svg class="dd" viewBox="0 0 6 3"><use href="#tri"/></svg></span>
<div class="spin big"><span>12</span><i><b class="up"></b><b class="dn"></b></i></div>
<div class="combo"><span>пикс</span><b class="dn"></b></div>
<span class="s"><svg viewBox="0 0 30 30"><path d="M3 2l7 11M10 13l16-5M10 13v15" stroke="#8cc491" stroke-width="2.600"/><path d="M8 11h5v5H8z" fill="#ccc" stroke="#555" stroke-width="1.300"/></svg></span>
<span class="s"><svg viewBox="0 0 30 30"><path d="M4 4c5-5 10 0 15-1s10-1 9 6-8 6-10 4" fill="#c9c9c9" stroke="#555" stroke-width="1.300"/><path d="M2 8c1-6 12-7 14-1s-1 8 3 12-1 10-5 9-5-5-5-9-8-4-7-11z" fill="#7fbd84" stroke="#444" stroke-width="1.400"/><path d="M4 13h12" stroke="#333" stroke-dasharray="2 1.500"/><use href="#tri" x="25" y="25"/></svg></span>
<span class="s dis"><svg viewBox="0 0 30 30"><path d="M2 2l26 26M28 2L2 28" stroke="#999" stroke-width="2"/><circle cx="15" cy="15" r="2.500" fill="#fff" stroke="#888"/></svg></span>
<span class="s dis"><svg viewBox="0 0 30 30"><path d="M2 28L28 2" stroke="#999" stroke-width="2"/><path d="M6 4l7 9 9-3 3 16-6-9-9 3z" fill="#a09a70"/></svg></span><i class="arr off"></i>
<span class="s dis"><svg viewBox="0 0 30 30"><path d="M3 27l7-4L4 8l14 10" fill="none" stroke="#888" stroke-width="1.800"/><circle cx="5" cy="8" r="2.500" fill="#fff" stroke="#888"/><circle cx="10" cy="23" r="2.500" fill="#fff" stroke="#888"/><path d="M14 5l5-3 7 17-5-3z" fill="#d9cf95" stroke="#999"/></svg></span>
</div>

<div class="bar bar4">
<i class="grip first"></i>
<span class="s"><svg viewBox="0 0 30 30"><path d="M2 4h12l6 10 8 2" stroke="#2b4057" stroke-width="1.200" fill="none"/><g fill="#fff" stroke="#415a75"><circle cx="3" cy="4" r="1.800"/><circle cx="14" cy="4" r="1.800"/><circle cx="20" cy="14" r="1.800"/></g><text x="1" y="24" class="gA">A</text><path d="M24 1l1.500 3 3.500.4-2.500 2.200.6 3.400-3.100-1.700L21 10l.6-3.400L19 4.400l3.500-.4z" fill="#6d97c4" stroke="#2b4057" stroke-width=".8"/><use href="#bStar"/></svg></span><i class="arr"></i>
<span class="s"><svg viewBox="0 0 30 30"><path d="M6 4h18v19H6z" fill="none" stroke="#555" stroke-width="1.400" stroke-dasharray="1.500 2"/><g fill="#eee" stroke="#555" stroke-width="1.300"><path d="M4 2h4v4H4zM22 2h4v4h-4zM4 21h4v4H4z"/></g><path d="M9 3l1 22 4.500-4.500L19 29l4-2-4-8h6.500z" fill="#fff" stroke="#111" stroke-width="1.400"/></svg></span>
<span class="s"><svg viewBox="0 0 30 30"><path d="M5.500 4L25 3.500 14 25.500 5 20z" fill="none" stroke="#222" stroke-width="1.400"/><g fill="#2680ff"><circle cx="5.500" cy="4" r="3.200"/><circle cx="25" cy="3.500" r="3.200"/><circle cx="5" cy="20" r="3.200"/><circle cx="14" cy="25.500" r="3.200"/></g><use href="#bPlus"/></svg></span>
<span class="s"><svg viewBox="0 0 30 30"><path d="M25 5L8 3.500 4 15l8 11" fill="none" stroke="#222" stroke-width="1.400"/><g fill="#2680ff"><circle cx="8" cy="3.500" r="3.200"/><circle cx="25.500" cy="5" r="3.200"/><circle cx="4" cy="15" r="3.200"/><circle cx="12" cy="26" r="3.200"/></g><use href="#bPlus"/></svg></span>
<span class="s"><svg viewBox="0 0 30 30"><path d="M14.500 3l4 8.500 8.500.6-6.500 5.900L23 27l-8.500-4.500L6 27l2.500-9L2 12l8.500-.5z" fill="#fdeec0" stroke="#e0a94a" stroke-width="1.300"/><use href="#bPlus"/></svg></span>
<span class="s"><svg viewBox="0 0 30 30"><text x="7" y="22" class="gT">T</text><path d="M2 22h4v4H2z" fill="#ccc" stroke="#666"/><use href="#bPlus"/></svg></span>
<span class="s"><svg viewBox="0 0 30 30"><text x="2" y="18" class="gs" transform="rotate(-20 2 18)">a</text><text x="11" y="12" class="gs">b</text><text x="20" y="12" class="gs">c</text><path d="M5 22l9-4 11-2" stroke="#666" fill="none" stroke-dasharray="2 1.500"/><g fill="#ccc" stroke="#666"><path d="M3 20h4v4H3zM13 16h4v4h-4zM24 14h4v4h-4z"/></g><use href="#bPlus"/></svg></span>
<i class="sep"></i>
<span class="s note"><svg viewBox="0 0 30 30"><path d="M1.500 2h27v19H9.500L1.500 28z" fill="#e9edf0" stroke="#888" stroke-width="1.200"/><text x="8.500" y="18" class="gT">T</text></svg></span><i class="arr"></i>
</div>

<main class="work">
<aside class="left">
  <section class="dock browser">
    <div class="dtitle"><h2>Браузер</h2><svg viewBox="0 0 14 14"><use href="#float"/></svg><svg viewBox="0 0 14 14"><use href="#close"/></svg></div>
    <div class="dtools">
      <svg viewBox="0 0 20 20"><path d="M2.500 2h14v14h-14z" fill="#f3f3f3" stroke="#888" stroke-width="1.200"/><rect x="11.500" y="11.500" width="8" height="8" rx="2" fill="#5a8c5a"/><path d="M15.500 13v5M13 15.500h5" stroke="#fff" stroke-width="1.600"/></svg>
      <svg viewBox="0 0 28 28"><use href="#refresh"/></svg>
      <svg viewBox="0 0 20 20"><use href="#funnel"/></svg>
      <svg viewBox="0 0 20 20"><use href="#tree"/><path d="M14 1l5.500 6.500H16.500V18h-5V7.500H8.500z" fill="#5d8fc2" stroke="#3b5f86" stroke-width=".8"/></svg>
      <svg viewBox="0 0 20 20"><use href="#info"/><text x="7.500" y="15" class="gi2">i</text></svg>
    </div>
    <div class="box">
      <ul class="tree">
        <li><i></i><svg viewBox="0 0 20 20"><path d="M10 .5l2.700 6.500 7 .4-5.400 4.600L16 19.200l-6-3.800-6 3.800 1.700-7.200L.3 7.400l7-.4z" fill="#fdf15a" stroke="#c9a714"/></svg>Избранное</li>
        <li><i class="o"></i><svg viewBox="0 0 20 20"><path d="M1 1.500h4V2h14v16H4c-2 0-3-1-3-2z" fill="url(#gPaper)" stroke="#aaa"/><path d="M11.500 1h4v6.500l-2 2-2-2z" fill="#6d97c4" stroke="#415a75" stroke-width=".6"/></svg>Пространственные закладки</li>
        <li class="k"><i></i><svg viewBox="0 0 20 20"><use href="#folder"/></svg>Закладки проекта</li>
        <li class="k"><i></i><svg viewBox="0 0 20 20"><use href="#folder"/></svg>Пользовательские закладки</li>
        <li class="sel"><i class="o"></i><svg viewBox="0 0 20 20"><path d="M1.500 2h7l2 2.500h8V18h-17z" fill="#b5dc4a" stroke="#8a8a87" stroke-width="1.400"/><path d="M3 6l14 10M3 16l6-5" stroke="#e6f3c0" stroke-width="1.300"/><path d="M12.500 13L9 9q-1-3 1.500-3.500 1.500 0 2.500 1.500 1-1.500 2.500-1.500Q18 6.500 17 9z" fill="#0c8a0c"/></svg>Домашний каталог проекта</li>
        <li class="k"><i class="c"></i><svg viewBox="0 0 20 20"><path d="M1 1h9l2 1.500h7V6h-6l-2-2H1z" fill="#8a8a87"/><path d="M1.500 6h7l2 2.500h8V18.500h-17z" fill="#f0f0f0" stroke="#8a8a87" stroke-width="1.400"/></svg>fabdem</li>
        <li class="k"><i class="c"></i><svg viewBox="0 0 20 20"><use href="#folder"/></svg>saga-9.3.2_x64</li>
        <li class="k"><i class="c"></i><svg viewBox="0 0 20 20"><use href="#folder"/></svg>Новая папка</li>
        <li class="k"><i></i><svg viewBox="0 0 20 20"><use href="#raster"/></svg>dem.tif</li>
        <li class="k"><i class="c"></i><svg viewBox="0 0 20 20"><path d="M1.500 1.500h17v17h-17z" fill="#ececec" stroke="#8a8a87" stroke-width="1.400"/><path d="M7 1.500v17M13 1.500v17" stroke="#999"/><path d="M9 3h2M10 5h2M9 7h2" stroke="#555" stroke-width="1.200"/><rect x="8.300" y="9" width="3.600" height="9" rx="1.600" fill="none" stroke="#444" stroke-width="1.200"/></svg>Ex12.zip</li>
        <li class="k"><i class="c"></i><svg viewBox="0 0 20 20"><use href="#qlogo"/></svg>Ex12_Entin</li>
        <li class="k"><i class="c"></i><svg viewBox="0 0 20 20"><use href="#db"/></svg>fabdem_mosaic.vrt</li>
        <li class="k"><i class="c"></i><svg viewBox="0 0 20 20"><use href="#db"/></svg>fabdem_mosaic_crop.vrt</li>
        <li><i class="c"></i><svg viewBox="0 0 20 20"><use href="#folder"/></svg>Домашний каталог</li>
      </ul>
      <div class="sb"><i class="u"></i><b class="h1"></b><b class="g1"></b><i class="d"></i></div>
    </div>
  </section>
  <div class="hgrip"></div>
  <section class="dock layers">
    <div class="dtitle"><h2>Слои</h2><svg viewBox="0 0 14 14"><use href="#float"/></svg><svg viewBox="0 0 14 14"><use href="#close"/></svg></div>
    <div class="dtools">
      <svg viewBox="0 0 20 20"><path d="M1 9l8-5 6 7-4 7H3z" fill="#f3d24a"/><path d="M1 11l6 7 4-1-6-7z" fill="#e0453a"/><path d="M4 8l8 8" stroke="#5d8fc2" stroke-width="2"/><path d="M11 12l8-9" stroke="#b58335" stroke-width="3"/><path d="M7 9l6 6 3-3-5-5z" fill="#e8a15a"/></svg>
      <svg viewBox="0 0 20 20"><path d="M4 6h9v9H4zM7 3h9v9M1 8v10h9" fill="#f3f3f3" stroke="#777" stroke-width="1.300"/><path d="M11 0v12M8.500 3L11 0l2.500 3" stroke="#4a7ab5" stroke-width="1.600" fill="none"/><rect x="12" y="12" width="7.500" height="7.500" rx="1.500" fill="#5a8c5a"/><path d="M15.700 13.500v4.500M13.500 15.700h4.500" stroke="#fff" stroke-width="1.400"/></svg>
      <svg viewBox="0 0 20 20"><path d="M1 10c4-7 14-7 18 0-4 6-14 6-18 0z" fill="#fff" stroke="#888" stroke-width="1.200"/><circle cx="10" cy="9.500" r="4.300" fill="#5d8fc2"/><circle cx="10" cy="9.500" r="1.800" fill="#1f2f42"/><use href="#tri" x="14" y="16"/></svg>
      <svg viewBox="0 0 20 20"><use href="#funnel" transform="scale(.92 1)"/><use href="#tri" x="14" y="16"/></svg>
      <svg class="fade" viewBox="0 0 20 20"><text x="0" y="12" class="ge2">ε</text><path d="M10 11h9v7h-2v-4M12 18v-7" fill="none" stroke="#888" stroke-width="2"/></svg><i class="arr off"></i>
      <svg viewBox="0 0 20 20"><use href="#tree"/><path d="M14 19l5.500-6.500H16.500V2h-5v10.500H8.500z" fill="#5d8fc2" stroke="#3b5f86" stroke-width=".8"/></svg>
      <svg viewBox="0 0 20 20"><use href="#tree"/><path d="M14 1l5.500 6.500H16.500V18h-5V7.500H8.500z" fill="#5d8fc2" stroke="#3b5f86" stroke-width=".8"/></svg>
      <svg viewBox="0 0 20 20"><path d="M2.500 2h14v14h-14z" fill="#f3f3f3" stroke="#888" stroke-width="1.200"/><rect x="11.500" y="13" width="8" height="6" rx="1.500" fill="#e5484d"/><path d="M13 16h5" stroke="#fff" stroke-width="1.600"/></svg>
    </div>
    <div class="box">
      <div class="layerlist">
        <div class="lrow"><i class="o"></i><span class="chk on"><svg viewBox="0 0 12 12"><path d="M1.500 6.500l3 4L10 1" fill="none" stroke="#000" stroke-width="2.200"/></svg></span><svg viewBox="0 0 20 20"><use href="#raster"/></svg><strong>flowacc</strong></div>
        <div class="band">Канал 1</div>
        <div class="ramp"><b></b><div><span>73 224 968</span><span>519,226746</span></div></div>
        <div class="lrow"><i class="o"></i><span class="chk"></span><svg viewBox="0 0 20 20"><use href="#raster"/></svg><em>DEM_fill</em></div>
        <div class="band">Канал 1</div>
        <div class="ramp"><b></b><div><span>308,516663</span></div></div>
      </div>
      <div class="sb"><i class="u"></i><b class="h2"></b><b class="g2"></b><i class="d"></i></div>
    </div>
  </section>
</aside>
<div class="vgrip"></div>
<section class="map">
<svg viewBox="460 251 931 733" shape-rendering="crispEdges">
<path d="M496 303L1322 268 1355 933 519 968z"/>
<g fill="none" stroke-width="3">
<g transform="translate(460 250) scale(.33333)">
  <g stroke="#d5d5d5"><path d="M441 255v-42l12-14M457 192h4M480 197l6 5M490 212l8 8M528 236l5 5M545 252l10 3h11v-10M560 202v3M560 210v9M530 166v3M1125 222v18M1147 262v3M1150 317l3 9M1154 330l-4 10h-6M1326 677v26M1334 668l5-4M858 551h11M889 548l5-5M918 530l8-8M803 572h23M772 591l16-13h7M965 481v9M1009 467h4M1230 986h22M1335 1070h25M1366 1065h5M930 1095h13M913 1130l8-8M1046 1053v9M1292 1063l14 14"/><path d="M1157 998l14 6M1195 992h4M1213 1003l6-4M1256 990v8M1251 1040v5M1251 1070v6h6M1398 1045v-12l-10-18M1428 955v20M1430 1010v8" stroke-dasharray="6 5"/></g>
  <g stroke="#a0a0a0"><path d="M1043 138l62 62M677 898l22 22M751 996l30 30M733 979l9 9M620 866h10l12 8M1035 130h5"/><path d="M1047 360v50" stroke-dasharray="6 4"/><path d="M985 473l25-6 20-15 20-18 25-14 20-12 10-10M828 570l20-8M648 603l12-18M674 593h8M706 610l12 4M624 603v10M943 1080l10-18 20-2 25 10 25 22 22 15M640 874l10 12M705 936l15 25M685 1053l15-4 12 10 15 14h20l30-14h15M815 1058l10 8M1072 1025l50-12" stroke-dasharray="6 8"/></g>
  <g stroke="#4c4c4c" stroke-dasharray="5 9"><path d="M317 238l50-17M400 242l10 8M299 278v10M425 258h15M735 276h45l40-10 40-16 45-4 15-10 25 2M938 278v18l12 20h16M1000 350h6M457 748l20-15 25-12h25M530 764l20 12M572 798l20 20 30 18M450 828l18-18 22-8 30 16M565 830l25 12 20 14M1110 405h40l35 5M1350 370l40 20 20-30 15-8 15 8M1175 788l40-15 50-33M600 1040h8M888 545l-2 60M910 445v30M1370 632h5"/></g>
  <g stroke="#303030"><path d="M281 322v18l6 7h14M465 540l25 20h12M390 787h30M1217 445l15 13h36M555 415v34M575 483l18 14M802 1028l14 14M770 922v16l10 8M1390 160l22-20M735 490l8 10M220 740l15 12"/><path d="M1022 760v50l-5 40 30 60v20l-40 35v25l15 30-5 50M250 722h25l45 15 25 8 22 22M325 880l60-8 22-16M505 556l25-3 20 20 30 26M595 500l20 40 16 30v50M745 358l40 15 30 2 30 30 15 36 20 12M655 460l35 20 45 8M745 500l80 15 30 25M775 830l20 50-12 30M385 630l45 20 20 35 45 12M910 625l20 20M130 495l20 30h35M800 1030h10M888 955v80l60 32" stroke-dasharray="5 9"/></g>
  <g stroke="#151515"><path d="M954 625v30l-50 40-70 18M1242 240l25 28M1245 203l15-15-15-35M505 990v28M150 540l40 46M1275 485l-50 35-70 25-10-20M1240 900l-15 50M180 195l90-20M345 360v28M1100 640l12 20-12 55"/><path d="M445 290l10 40-5 60M680 195l30 40 30 40M715 270l-50 70M255 360l-8 50-20 30M370 490l70 25M225 545l60-5M1190 608h40l30-20M145 890l60-10 70-25 30 20M630 740v80M890 830v110l50-25M1120 870l5 120M1370 860l15-20 35 40M400 1045l60-10M210 1060l40-30M1310 550l70 35 20-15M230 1105l60 10" stroke-dasharray="8 9"/></g>
</g>
<g transform="translate(920 250) scale(.33333)">
  <g stroke="#d8d8d8"><path d="M326 142h12M309 178v9M300 206h3M245 245v18M256 240l8-7M266 221v6M200 298h18M226 292l9-2M279 250h3M340 280l6 7M382 292l6 7-4 6M381 331h3M78 625h14M121 623h6M943 566h43M882 542h15M1058 516v7M1152 530h6M1200 545h9M700 817v12M687 865h12M708 871l10 10M739 899l8-4M778 886l10 5M799 990v28M781 955l9-6M228 869h14M330 868l8 8M355 886l10-5M133 909l12-11M183 871l9 7M805 448v9M659 697l15 14M607 1083v6M504 1021h9M1170 533h3M1085 498v4"/><path d="M151 638l18 15-8 15v25l-6 15 16 20M174 770l25 18M190 788h14M252 798l12-4M273 814l15 15 16 5 10-12-5-15M240 828v30M1222 540h4v-2M802 900v20M801 1020l8 12M862 1087l30 25v20M390 878h25v10M391 890v18l20 20 30 10M475 950v20l4 20M469 1015v15M515 1025l5 20M525 1062v4M540 1100l30 5 30 0M748 893l30-6M1003 554l14-16" stroke-dasharray="6 7"/><path d="M133 928l-6 18" stroke-dasharray="5 8"/></g>
  <g stroke="#8a8a8a"><path d="M75 944l18-17 20 15M30 360l8-8 10 6M89 345l14 21M60 395l15-12M555 719l20-16"/><path d="M143 314l10-10M155 370l4 15v20M64 352h10M135 418h4M290 256l20 6M370 370l5 35-14 8v10M575 703l20-10M603 680h4M643 680h4M673 720l-6 30 6 45M66 625h10M46 970v-12l15-10M145 935l15 5M48 1015l20-5 12 4 10 15-4 15 14 20M455 1079l25-18 35-12" stroke-dasharray="6 9"/></g>
  <g stroke="#484848"><path d="M1055 622v32M1068 589l10-10M493 295h20M341 440v16M703 92l20 26M765 390l11 26"/><path d="M1085 500l10 20 25 8M1083 563l20-2v20M1062 665l10 20M410 302l10 6M445 300v-5h25M375 405l40 25M330 455l-25 60M705 565l4 20-30 10-10 20M825 953l28 3M737 180l12 35-5 40-30 40M1087 395v50l3 50M1045 1072h25l25-10M1128 1005v35M1085 960v10M470 690l10 3M1054 95v25M680 700h3" stroke-dasharray="5 9"/></g>
  <g stroke="#1f1f1f"><path d="M1119 795v42M511 590l15 33 35 40v22M10 160l22-18M230 208h28M690 740l35-32M1035 310l10 14M815 1090v40M70 905v14M870 515l20 20"/><path d="M205 155l20 55M90 240l40 10 22 25M115 490l20-50M630 430l20 45v45l30 20M760 100l25-10 20 12 60 22M680 260l20 32M850 350l10-30 8-8M825 355l25-8 40 20M880 370l160 12M955 460l35 70M915 635l10-50 20-15M800 770l10 40M1085 690v80M1115 850l-20 30-8 60M870 960v-40l20-40M490 800l40-50 8 45M180 1000v-35l45 5 25 25 45 35M605 1070v-40h40M730 1085l40-12 45 20M1020 190l-10 60 30 60 35 55M1190 130l10 40-8 70M300 510l-50 20M190 1030l-10 40M110 1080v50M860 470l5 40" stroke-dasharray="7 9"/></g>
</g>
<g transform="translate(460 620) scale(.33333)">
  <g stroke="#d0d0d0"><path d="M285 711v42M302 780v22M307 820l12 6M334 840h6M348 843h14M371 868v8M397 903l12 4M442 920h17M486 939v14M272 688v12M285 674h8M354 653l13-13M342 577l25 26M597 989l10 9M748 576h11M775 590l8 7M820 607h17M907 618h12M933 599v18M939 580v8M913 17l8-9M902 108l10-12M952 110l16 4M848 222h10M880 224h6M920 177h6M771 215h8M715 200l14 10M1178 872h10M1221 926h18M1255 932h12M1066 718l9 7M1408 973l10 7M1396 950l8-2M979 645l6 9M1299 943l4-2M1163 855v10"/><path d="M290 757l12 18M571 955l6 18M683 985l15 35M715 990v12l22 20M845 603l-5 4M733 555l10-16M1375 944l12 5M1134 787v10M1283 942h4" stroke-dasharray="6 6"/></g>
  <g stroke="#707070"><path d="M497 227h57l5-3M625 209l14-12M1025 62l17-17M1035 111v14"/><path d="M236 445v25l30 15 30 6 3 20 6 26M580 211l25 4M655 190l25 2 20 6M786 221h8M893 203h6M930 226l6 30M960 305l8 6M1040 140l15 18M935 102h8M644 507l32 4M880 610l6 4M1030 690h6M990 658l10 18M976 590v-30l-8-20-25-22-20-6M1145 865l30 6M1200 870h6M1372 325v20l15 2 15 20 30 17M1420 605l12 7M145 50h30" stroke-dasharray="6 8"/></g>
  <g stroke="#353535"><path d="M378 635h60M175 50l15-14M1090 902l20-20M664 565v12l-20 10M1315 92v20M1305 58v10M650 540l10 14M1320 0l12 20M800 960v24M985 610l8-8h10M1210 575l22 23h10M1365 312l10 14M1078 830l25 25"/><path d="M1262 850v12l-20 28M645 133l12 30v25M190 36l30-12M640 587l-80 15M260 385v15l60 5 20 25M355 430l30-30M510 430v45l30 20 20-7M546 430v20M625 490l30 60M590 875l20 15 30 12M748 500v20M900 480v-30l-15-50-50-15M530 760l50 60 14-25M970 755l30 15 55 60 40 28 50 5M1250 600l80 25 50 5M1250 780l-2 30M1210 408l50-27 70-20 40-20M1000 600l45-10 18-15M710 900v20l30 10M770 95l45 20 40-40M1165 547l40 20M1390 480l20 20M340 910l20-20 40 15M838 615v20M1000 345h10M1340 50l20 50" stroke-dasharray="6 9"/></g>
  <g stroke="#151515"><path d="M568 320v60l-20 40M474 320l5 90 30 20M410 150l-20 40 20 15M290 300l-15 30M780 625l-40 30-65 2M900 700l60-45M760 700l70-20M480 95l80 15 30-10M690 840l30-25M170 610l40-5M240 870l60-15M860 1000l20-30M840 220l8 80M770 835v60l80-20M1160 640l20 80 60 30 10-60M1190 750l60 5M950 905h70l40-20M1390 760l-25 80v90M380 760v60l-20 40M270 50l5 40M1110 250v40l80 20M1440 430l-60 40-80-20M560 1000l30-30M720 420l30 45" stroke-dasharray="8 10"/></g>
</g>
<g transform="translate(920 620) scale(.33333)">
  <g stroke="#e0e0e0"><path d="M562 144v28M595 31l14 10M622 56v18l-10 18h-9M567 63h10M505 253l18 10M530 305l10 15M553 388v8M564 403l18-5M586 460l12 22M565 499h18M487 532h16M570 534h16M600 514h8M828 521h20M911 308v16M967 350l3 8M982 413v35M1000 462h24M1027 488v22h-14M1126 457l15 12M1240 497h12M1263 495v6M1263 510v4M891 0v8M893 40v26M924 105v18M929 146v18M934 180v10M500 232v8M668 518l10-10M645 632l10-14M651 576h12M672 579l8 8M95 618h24M158 572h10l10-10M240 538l12 6M262 546h8M1115 461h8M840 870l14 14M939 343h12M952 520l12 8M15 948h10M27 972l10 8M72 990v8M528 203h10M558 192h6"/><path d="M892 66l20 20M925 100v-10l45-10 15-12 35-30 15-8 12 0v-8M922 110l10 40v40l-30 18M908 245l-10 25 8 30M606 430v10M580 395l14-5M588 122v4M562 370v6M540 320l10 25M521 534h8M185 552l-10 5M205 540l55 6 25-15h30v-16h30l50 12 15-8 30 2M400 530l20-10 20-2M726 508h20l14 12M799 528v3M862 512l25-3 15 6M920 535h3M970 525l20-15 30-2M970 405l6 10M1058 476h20M1147 478h12M510 240h10l-15 15M148 592v6M862 890l-8 20v10M822 905v10M795 935l-12 10 10 14M655 560v15M770 585h6M660 612h6" stroke-dasharray="5 7"/></g>
  <g stroke="#7a7a7a"><path d="M154 462v20M89 400v8l8 12M297 883l16 9M786 786l14 14M535 744h22M40 605h12M1126 456l12-16"/><path d="M0 348l30 20 25 18h15M100 425l25 32M148 490l-12 45M55 610l45 8M645 655l-25 25-15 45M656 530l12-12M515 753l20-8M313 892l30 20 18 22M803 830l18 20M423 968v3M688 500l-12 10" stroke-dasharray="6 8"/></g>
  <g stroke="#353535"><path d="M248 130h42M147 615h15M170 628l16 12M197 432h18M110 553l12 10M480 160h26M992 838l20-22"/><path d="M373 790v20l20 16h34M208 940h34M278 910v10M183 640l30 15M913 545v50M1137 380l10-60M1144 410l-12 30M845 740l-35 20M887 676l-42 60M908 935l25-40 35-45M1071 36l20 4 40 40M935 185l70-5M835 200l5 24 50 8M730 218l50-20M840 352h50l14-14M1190 452h5M1095 440l5-15M1270 795l-6 60v75M220 400v20l35 8M240 108l10 20M318 125l12-15 45-40M1280 640v20M385 360v50M405 490l30 20M820 370l-18 30M20 485l30 10M1190 774h60M500 165l60 10" stroke-dasharray="5 10"/></g>
  <g stroke="#181818"><path d="M60 80v-40l30-20M110 70l45 25v30M325 195v50l-25 65 20 40M190 370l10-80M560 190l50 20 30 30M610 330h50M920 580l50-5 50 30 50 55 80 5M780 670l80-40 15-30M900 410v40l30 18 40-10M1130 175l-2 60 10 50M1200 410l30-30M1180 420l30-10M145 360v50M380 410l-8 70M390 180l100-20M570 310l-30-5M250 820l22 35-25 25M470 810l10-20M320 640l-5 40 30 60M1140 870l-30 60M1105 530v50M1100 660l120-20 35-30-8-50M1260 690v70M1190 774l-20 15-40 40M770 115l100-40M720 380l-10 80-20 50M40 540l-5 40 10 20M105 660l10-30M620 750l30 60M1000 120l30 60 30 50M600 20l-80 40" stroke-dasharray="8 10"/></g>
</g>
</g>
</svg>
</section>
<div class="vgrip r"></div>
<aside class="right">
  <div class="dtitle"><h2>Инструменты анализа</h2><svg viewBox="0 0 14 14"><use href="#float"/></svg><svg viewBox="0 0 14 14"><use href="#close"/></svg></div>
  <div class="dtools">
    <svg viewBox="0 0 20 20"><path d="M6 0v12M0 6h12M2 2l8 8M10 2l-8 8" stroke="#d01c1f" stroke-width="2.200"/><circle cx="6" cy="6" r="3.800" fill="#d01c1f"/><circle cx="6" cy="6" r="1.500" fill="#fff"/><path d="M15 5v10M10.500 10h9M12 7l6 6M18 7l-6 6" stroke="#666" stroke-width="1.400"/><circle cx="9.500" cy="16" r="3" fill="none" stroke="#7ea6d8" stroke-width="2"/><use href="#tri" x="14.500" y="17"/></svg>
    <svg viewBox="0 0 30 30"><use href="#py" x="-2" y="-2"/><use href="#tri" transform="translate(20 24) scale(1.500)"/></svg>
    <svg viewBox="0 0 20 20"><circle cx="10" cy="10" r="8.800" fill="#fafafa" stroke="#888" stroke-width="1.300"/><path d="M10 4v6.500l4 2.500" fill="none" stroke="#777" stroke-width="1.200"/></svg>
    <svg viewBox="0 0 20 20"><path d="M3 1.500h9.500l4.500 4.500v12.500H3z" fill="#fff" stroke="#888" stroke-width="1.200"/><path d="M12 1.500V6.500h5" fill="#ddd" stroke="#888"/><path d="M5 7h6M5 10h10M5 13h8M5 16h10" stroke="#777" stroke-width="1.200"/></svg>
    <i class="sep"></i>
    <svg class="fade" viewBox="0 0 20 20"><path d="M1 2h12v11H1z" fill="#ddd6b8" stroke="#bbb"/><path d="M9 18l2-5 7-8-2 8-5 6z" fill="#aaa"/></svg>
    <i class="sep"></i>
    <svg viewBox="2 0 27 28"><use href="#wrench"/></svg>
  </div>
  <div class="find"><svg viewBox="0 0 16 16"><use href="#search"/></svg><em>Поиск...</em></div>
  <div class="box">
    <div class="tools">
      <ul class="groups">
        <li><i class="c"></i>imagery_photogrammetry</li><li><i class="c"></i>io_pdal</li><li><i class="c"></i>io_virtual</li><li><i class="c"></i>io_webservices</li><li><i class="c"></i>Point clouds</li><li><i class="c"></i>polygon_tools</li><li><i class="c"></i>Projections and Transformations</li><li><i class="c"></i>Raster analysis</li><li><i class="c"></i>Raster calculus</li><li><i class="c"></i>Raster creation tools</li><li><i class="c"></i>Raster filter</li><li><i class="c"></i>Raster tools</li><li><i class="c"></i>sim_air_flow</li><li><i class="c"></i>sim_erosion</li><li><i class="c"></i>sim_geomorphology</li><li><i class="c"></i>sim_landscape_evolution</li><li><i class="c"></i>Simulation</li><li><i class="c"></i>ta_cliffmetrics</li><li><i class="c"></i>Terrain Analysis - Channels</li><li><i class="o"></i>Terrain Analysis - Hydrology</li>
      </ul>
      <ul class="algs">
        <li><svg viewBox="0 0 20 20"><use href="#saga"/></svg>Breach depressions</li>
        <li><svg viewBox="0 0 20 20"><use href="#saga"/></svg>Burn stream network into dem</li>
        <li class="sel"><svg viewBox="0 0 20 20"><use href="#saga"/></svg>Catchment area</li>
        <li><svg viewBox="0 0 20 20"><use href="#saga"/></svg>Catchment area (flow tracing)</li>
        <li><svg viewBox="0 0 20 20"><use href="#saga"/></svg>Catchment area (recursive)</li>
        <li><svg viewBox="0 0 20 20"><use href="#saga"/></svg>Cell balance</li>
        <li><svg viewBox="0 0 20 20"><use href="#saga"/></svg>Cit index</li>
        <li><svg viewBox="0 0 20 20"><use href="#saga"/></svg>Edge contamination</li>
        <li><svg viewBox="0 0 20 20"><use href="#saga"/></svg>Fill sinks (planchon/darboux, 2001)</li>
        <li><svg viewBox="0 0 20 20"><use href="#saga"/></svg>Fill sinks (wang &amp; liu)</li>
      </ul>
    </div>
    <div class="sb"><i class="u"></i><b class="g3"></b><b class="h3"></b><b class="g3b"></b><i class="d"></i></div>
  </div>
  <div class="tabs"><span class="act">Инструменты анализа</span><span>Результат определения</span></div>
</aside>
</main>

<footer class="status">
  <div class="locate"><svg viewBox="0 0 16 16"><use href="#search"/></svg>Искать (Ctrl+K)</div>
  <span class="msg">Удален 1 элемент легенды.</span>
  <span class="lb l1">Координаты</span>
  <div class="field f1">699775&nbsp; 6113717</div>
  <svg class="mouse" viewBox="0 0 20 20"><path d="M2 5q2-4 6-4 4 1 8 8 3 5 1 8-3 4-8 1Q3 13 2 5z" fill="#222"/><path d="M4 5l4 8M7 3l4 8M10 3l3 6" stroke="#fff" stroke-width="1.400"/><circle cx="12" cy="14" r="3.300" fill="#fff" stroke="#222" stroke-width="1.500"/><path d="M14 5l5-5M15 7l5-2" stroke="#222" stroke-dasharray="2 1.500"/></svg>
  <span class="lb l2">Масштаб</span>
  <div class="field f2"><span>1:396623</span><i><b class="dn"></b></i></div>
  <svg class="lock" viewBox="0 0 16 20"><path d="M3.500 10V6a4.500 4.500 0 0 1 9 0v4" fill="none" stroke="#8f8f8f" stroke-width="2"/><rect x=".5" y="9.500" width="15" height="9.500" rx="1" fill="#5e5e5e"/></svg>
  <span class="lb l3">Увеличение</span>
  <div class="spin"><span>100%</span><i><b class="up"></b><b class="dn"></b></i></div>
  <span class="lb l4">Поворот</span>
  <div class="spin"><span>0,0 °</span><i><b class="up"></b><b class="dn"></b></i></div>
  <span class="chk on"><svg viewBox="0 0 12 12"><path d="M1.500 6.500l3 4L10 1" fill="none" stroke="#000" stroke-width="2.200"/></svg></span>
  <span class="lb l5">Отрисовка</span>
  <svg class="crs" viewBox="0 0 20 20"><circle cx="10" cy="9" r="8" fill="#777"/><path d="M10 1v16M2 9h16M3.500 5h13M3.500 13h13" stroke="#eee"/><ellipse cx="10" cy="9" rx="4" ry="8" fill="none" stroke="#eee"/><path d="M1 12q9 6 18 0" stroke="#555" stroke-width="1.500" fill="none"/></svg>
  <span class="lb l6">EPSG:32636</span>
  <svg class="bubble" viewBox="0 0 20 18"><rect x=".5" y=".5" width="19" height="13.500" rx="6.700" fill="#5a5a5a"/><path d="M12 12l5.500 5.500L17 11z" fill="#5a5a5a"/><path d="M4.500 7.300h2M9 7.300h2M13.500 7.300h2" stroke="#fff" stroke-width="2.200"/></svg>
</footer>
</div>
</body>
</html>
```
FILE: styles.css
```css
* { box-sizing: border-box; }
body {
  margin: 0;
  font: 14.5px/20px "Open Sans", "Noto Sans", sans-serif;
  letter-spacing: -0.4px;
  color: #000;
  background: #f0f0f0;
}
h1, h2, ul { margin: 0; padding: 0; font-weight: 400; list-style: none; }
i { font-style: normal; }
.defs { position: absolute; }
.window { width: 1920px; height: 1021px; display: flex; flex-direction: column; overflow: hidden; border-bottom: 1px solid #343f66; }

.titlebar { height: 29px; flex: none; display: flex; align-items: center; background: #f0f3fb; padding-left: 2px; }
.titlebar .q { width: 20px; height: 20px; margin-top: -2px; }
.titlebar h1 { font-size: 14.2px; line-height: 20px; letter-spacing: -0.1px; margin: -1px 0 0 6px; }
.wbtns { margin-left: auto; display: flex; gap: 45px; padding-right: 25px; }
.wbtns svg { width: 14px; height: 14px; display: block; }

.menu { height: 26px; flex: none; display: grid; grid-template-columns: 68px 68px 44px 53px 92px 73px 65px 57px 103px 85px 51px 67px 80px; padding: 3px 0 0 13px; border-bottom: 2px solid #d6d6d6; font-size: 14.5px; line-height: 20px; }
.menu u { text-underline-offset: 2px; }

.bar { flex: none; display: flex; align-items: center; background: linear-gradient(#fbfbfb, #eeeeee); border-bottom: 1px solid #b2b2b2; }
.bar1 { height: 48px; }
.bar2, .bar3 { height: 49px; padding-top: 2px; }
.bar4 { height: 47px; padding-top: 2px; }
.s { flex: none; width: 41.25px; height: 39px; display: flex; align-items: center; justify-content: center; position: relative; }
.s svg { width: 30px; height: 30px; display: block; overflow: visible; }
.s svg.dd { position: absolute; right: 4px; bottom: 5px; width: 6px; height: 3px; }
.s.on { width: 40px; margin-right: 1.25px; background: #dcdcdc; border: 1px solid #a6a6a6; border-radius: 3px; }
.s.on.soft { border-color: #bdbdbd; background: #d9d9d9; }
.s.dis svg { opacity: .36; filter: saturate(.6); }
.s.note { margin-left: 2px; }
.arr { flex: none; width: 15px; height: 6px; }
.arr::before { content: ""; display: block; width: 0; margin-left: 2px; border: 4.5px solid transparent; border-top: 5px solid #4c4c4c; border-bottom: 0; }
.arr.off::before { border-top-color: #949494; }
.grip { flex: none; width: 20px; height: 21px; position: relative; background: repeating-linear-gradient(transparent 0 1px, #f6f6f6 1px 3px), repeating-linear-gradient(90deg, #a9a9a9 0 1px, transparent 1px 2.500px); background-clip: content-box; padding: 0 6px 0 10px; }
.grip.wide { width: 21px; }
.grip.snap { width: 23px; margin-right: -1px; }
.grip.first { width: 15.4px; padding: 0 4.400px 0 6px; }
.sep { flex: none; width: 8px; height: 24px; border-left: 2px solid #d2d2d2; margin-left: 6px; margin-right: -6px; }
.more { width: 12px; height: 10px; margin-left: 11px; }
.bar text { letter-spacing: 0; }
.ga { font: 14px "Open Sans"; fill: #333; }
.g11 { font: bold 10.5px "Liberation Sans"; fill: #222; }
.gi { font: italic bold 19px "Liberation Serif"; fill: #fff; }
.gi2 { font: italic bold 14px "Liberation Serif"; fill: #fff; }
.gq { font: 19px "Liberation Serif"; fill: #fff; }
.ge { font: bold 34px "Liberation Serif"; fill: #777; }
.ge2 { font: bold 22px "Liberation Serif"; fill: #777; }
.gl { font: bold 9.500px "DejaVu Sans"; fill: #333; }
.gl.red { fill: #e00; }
.gA { font: bold 21px "Liberation Serif"; fill: #6d97c4; stroke: #2b4057; stroke-width: .8px; }
.gT { font: bold 19px "Liberation Serif"; fill: #444; }
.gs { font: bold 11px "Open Sans"; fill: #444; }

.up, .dn { display: block; width: 0; height: 0; border: 4.5px solid transparent; }
.up { border-bottom: 5px solid #5f5f5f; border-top: 0; }
.dn { border-top: 5px solid #5f5f5f; border-bottom: 0; }
.spin { width: 101px; height: 25px; border: 1px solid #aeaeae; border-radius: 3px; background: #fff; display: flex; align-items: stretch; justify-content: space-between; line-height: 23px; padding-left: 5px; flex: none; }
.spin i { width: 18px; border-left: 1px solid #aeaeae; background: #f5f5f5; display: flex; flex-direction: column; align-items: center; justify-content: center; gap: 4px; }
.spin.big { background: #efefef; color: #777; font-size: 13.500px; padding-left: 6px; margin-left: -1px; margin-right: 2px; }
.spin.big .up, .combo .up { border-bottom-color: #999; }
.spin.big .dn, .combo .dn { border-top-color: #999; }
.combo { width: 118px; height: 27px; border: 1px solid #c4c4c4; border-radius: 3px; background: #f7f7f7; color: #777; font-size: 13px; display: flex; align-items: center; justify-content: space-between; padding: 0 10px 0 6px; margin-right: 2px; flex: none; }

.work { flex: 1; min-height: 0; display: flex; padding-top: 2px; }
.left { width: 451px; display: flex; flex-direction: column; }
.dock { display: flex; flex-direction: column; }
.browser { height: 366px; }
.layers { flex: 1; min-height: 0; }
.dtitle { height: 26px; flex: none; display: flex; align-items: center; padding-left: 5px; gap: 4px; }
.dtitle h2 { flex: 1; font-size: 14.5px; }
.dtitle svg { width: 14px; height: 14px; }
.left .dtitle { padding-right: 2px; }
.right .dtitle { padding-right: 2px; }
.dtools { height: 37px; flex: none; display: flex; align-items: center; gap: 12.4px; padding: 0 0 2px 10px; }
.dtools svg { width: 19px; height: 19px; flex: none; overflow: visible; }
.dtools .arr { margin: 0 -3px 0 -9px; }
.dtools .sep { height: 15px; margin: 0 -6px 0 -2px; width: 5px; border-color: #fff; }
.fade { opacity: .5; }
.box { flex: 1; min-height: 0; display: flex; background: #fff; border: 1px solid #b0b0b0; overflow: hidden; }
.tree { flex: 1; overflow: hidden; padding-top: 1px; letter-spacing: -.36px; }
.tree li { height: 22.5px; width: 268px; line-height: 22px; display: flex; align-items: center; padding-left: 4px; white-space: nowrap; }
.tree li.k { padding-left: 24px; }
.tree li svg { width: 19px; height: 19px; margin-left: 9px; margin-right: 7.500px; flex: none; }
.tree i, .lrow i, .groups i { width: 12px; display: flex; justify-content: center; flex: none; }
i.o::before { content: ""; border: 4.5px solid transparent; border-top: 5px solid #5a5a5a; border-bottom: 0; }
i.c::before { content: ""; border: 5px solid transparent; border-left: 5px solid #5a5a5a; border-right: 0; }
.tree .o, .tree .c { margin-top: -3px; }
.sel { background: #efefef; }
.sb { width: 17px; flex: none; display: flex; flex-direction: column; border-left: 1px solid #d8d8d8; background: #f4f4f4; }
.sb i { height: 17px; flex: none; display: flex; align-items: center; justify-content: center; background: #fcfcfc; }
.sb .u { border-bottom: 1px solid #b5b5b5; }
.sb .u::before { content: ""; border: 4.5px solid transparent; border-bottom: 5px solid #555; border-top: 0; }
.sb .d { border-top: 1px solid #b5b5b5; }
.sb .d::before { content: ""; border: 4.5px solid transparent; border-top: 5px solid #555; border-bottom: 0; }
.sb b { display: block; background: #e5e5e5; }
.sb .h1, .sb .h2, .sb .h3 { background: linear-gradient(90deg, #fdfdfd, #f1f1f1); border-bottom: 1px solid #b5b5b5; }
.h1 { height: 99px; }
.g1, .g2, .g3b { flex: 1; }
.h2 { height: 188px; }
.g3 { height: 240px; border-bottom: 1px solid #b5b5b5; }
.h3 { height: 150px; }

.hgrip { height: 7px; flex: none; background: radial-gradient(circle, #bbb .8px, transparent 1px) 0 2px / 3.500px 4px; background-clip: content-box; padding: 2px 212px 1px 217px; }
.layers .dtitle { height: 27px; }
.layers .dtools { height: 36px; }
.layerlist { flex: 1; overflow: hidden; }
.lrow { height: 25px; display: flex; align-items: center; padding-left: 7px; }
.lrow i { margin-top: -3px; }
.chk { width: 17px; height: 17px; border: 1px solid #b5b5b5; background: #fff; display: flex; align-items: center; justify-content: center; flex: none; }
.chk svg { width: 12px; height: 12px; }
.lrow .chk { margin-left: 10px; }
.lrow > svg { width: 18px; height: 18px; margin: 0 4px 0 9px; flex: none; }
.lrow strong { padding-left: 5px; font-size: 14px; letter-spacing: -.4px; }
.lrow em { flex: 1; height: 22px; line-height: 20px; border: 1px solid #b3d7f0; background: linear-gradient(#fafdff, #e6f3fc); font-weight: 700; color: #8a8f94; text-decoration: underline; text-underline-offset: 3px; padding-left: 3px; margin-right: 1px; font-size: 14.500px; letter-spacing: .2px; }
.band { height: 20px; line-height: 18px; padding-left: 54px; }
.ramp { display: flex; height: 150px; padding: 1px 0 0 54px; gap: 6px; }
.ramp b { width: 25px; background: linear-gradient(#fff, #000); }
.ramp div { display: flex; flex-direction: column; justify-content: space-between; font: 12px/14px "DejaVu Sans", sans-serif; letter-spacing: -.8px; }

.vgrip { width: 8px; flex: none; background: radial-gradient(circle, #b0b0b0 .8px, transparent 1px) 0 0 / 4px 4px; background-clip: content-box; padding: 357px 2px 356px; }
.map { width: 932px; flex: none; background: #fff; border: 1px solid #b4b4b4; border-width: 1px 1px 1px 0; margin-left: 1px; }
.map svg { width: 931px; height: 733px; display: block; }

.right { flex: 1; display: flex; flex-direction: column; min-width: 0; }
.right .dtools { gap: 12.2px; padding-left: 11px; height: 36px; padding-bottom: 1px; }
.find { height: 28px; flex: none; border: 1px solid #aaa; border-radius: 3px; background: #fff; display: flex; align-items: center; padding-left: 10px; gap: 10px; color: #8a8a8a; font-size: 13px; }
.find svg { width: 16px; height: 16px; }
.right .box { flex: none; height: 614px; }
.tools { flex: 1; overflow: hidden; padding-top: 2px; letter-spacing: -.24px; }
.groups li { height: 20px; line-height: 20px; display: flex; align-items: center; padding-left: 31px; white-space: nowrap; }
.groups i { margin-right: 10.500px; margin-top: -3px; }
.algs li { height: 22.5px; line-height: 22px; display: flex; align-items: center; padding-left: 79px; white-space: nowrap; }
.algs svg { width: 19px; height: 19px; margin-right: 8px; }
.tabs { display: flex; align-items: flex-start; font-size: 13px; letter-spacing: -.53px; border-top: 1px solid #c2c2c2; }
.tabs span { height: 26px; line-height: 25px; width: 166px; text-align: center; background: #dcdcdc; border: 1px solid #b8b8b8; border-top: 0; border-radius: 0 0 3px 3px; white-space: nowrap; }
.tabs .act { width: 158px; height: 28px; line-height: 29px; background: #f8f8f8; }

.status { height: 35px; flex: none; display: flex; align-items: center; padding-left: 5px; font-size: 14px; white-space: nowrap; letter-spacing: -.45px; }
.locate { width: 250px; height: 27px; border: 1px solid #b0b0b0; border-radius: 3px; background: #fff; color: #8a8a8a; display: flex; align-items: center; gap: 9px; padding-left: 11px; font-size: 13px; flex: none; }
.locate svg { width: 16px; height: 16px; }
.msg { width: 578px; margin-left: 10px; flex: none; }
.lb { letter-spacing: -.65px; flex: none; }
.l1 { width: 81px; }
.field { height: 27px; border: 1px solid #b0b0b0; border-radius: 3px; background: #fff; line-height: 25px; flex: none; }
.f1 { width: 125px; padding-left: 8px; }
.mouse { width: 19px; height: 20px; margin: 0 7px 0 6px; flex: none; }
.l2 { width: 70px; padding-left: 10px; }
.f2 { width: 96px; display: flex; justify-content: space-between; padding-left: 5px; }
.f2 i { width: 25px; border-left: 1px solid #b0b0b0; background: #f5f5f5; display: flex; align-items: center; justify-content: center; }
.lock { width: 16px; height: 20px; margin: 0 11px 0 15px; flex: none; }
.l3 { width: 80px; }
.l4 { width: 76px; padding-left: 12px; }
.status > .chk { margin: 0 7px 0 8px; }
.l5 { width: 86px; letter-spacing: -.45px; }
.l6 { letter-spacing: -.5px; }
.crs { width: 19px; height: 19px; margin-right: 3px; flex: none; }
.bubble { width: 20px; height: 18px; margin-left: auto; margin-right: 10px; flex: none; }
```
